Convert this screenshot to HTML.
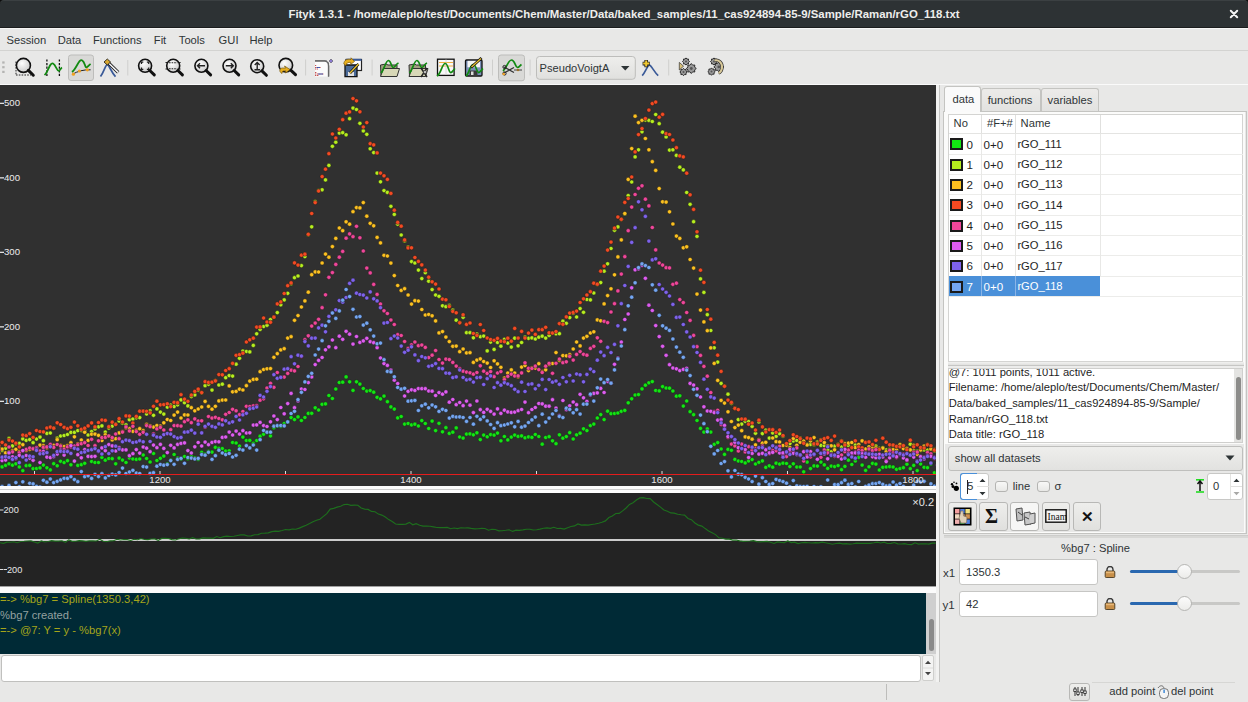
<!DOCTYPE html>
<html><head><meta charset="utf-8">
<style>
*{margin:0;padding:0;box-sizing:border-box}
html,body{width:1248px;height:702px;overflow:hidden;background:#e8e8e7;}
body{font-family:"Liberation Sans",sans-serif;font-size:11.2px;color:#2e3436}
.a{position:absolute}
.t{position:absolute;white-space:nowrap;line-height:1}
#title{left:0;top:0;width:1248px;height:28px;background:#2d3234;border-top:1px solid #3b4042;border-bottom:1px solid #1b1d1e;border-radius:4px 4px 0 0}
#menubar{left:0;top:28px;width:1248px;height:23px;background:#e8e8e7;border-top:1px solid #f6f6f5;border-bottom:1px solid #d3d3d1}
#toolbar{left:0;top:51px;width:1248px;height:34px;background:#e8e8e7;border-bottom:1px solid #fafafa}
.btn{position:absolute;border:1px solid #b8b8b6;border-radius:3px;background:linear-gradient(#eeeeec,#e0e0de)}
.sep{position:absolute;width:1px;background:#cfcfcd}
</style></head><body>
<div class="a" style="left:0;top:0;width:1248px;height:6px;background:#0c0c0c"></div>
<div id="title" class="a">
  <div class="t" style="left:288px;top:8px;width:672px;text-align:center;color:#eeeeec;font-weight:bold;font-size:11.4px">Fityk 1.3.1 - /home/aleplo/test/Documents/Chem/Master/Data/baked_samples/11_cas924894-85-9/Sample/Raman/rGO_118.txt</div>
  <svg class="a" style="left:1229px;top:8px" width="10" height="10"><path d="M1.8 1.8 L8.2 8.2 M8.2 1.8 L1.8 8.2" stroke="#f4f4f4" stroke-width="2" stroke-linecap="round"/></svg>
</div>
<div id="menubar" class="a">
  <div class="t" style="left:6.5px;top:6px">Session</div>
  <div class="t" style="left:57.7px;top:6px">Data</div>
  <div class="t" style="left:93px;top:6px">Functions</div>
  <div class="t" style="left:153.8px;top:6px">Fit</div>
  <div class="t" style="left:178.8px;top:6px">Tools</div>
  <div class="t" style="left:218.6px;top:6px">GUI</div>
  <div class="t" style="left:249.4px;top:6px">Help</div>
</div>
<div id="toolbar" class="a"><svg class="a" style="left:0;top:0" width="760" height="34" viewBox="0 51 760 34"><defs><radialGradient id="mg" cx="0.4" cy="0.35" r="0.7"><stop offset="0" stop-color="#ffffff"/><stop offset="1" stop-color="#c8c8c8"/></radialGradient></defs><rect x="2.2" y="61.4" width="2.4" height="2.2" fill="#b4b4b2"/><rect x="2.2" y="66.10000000000001" width="2.4" height="2.2" fill="#b4b4b2"/><rect x="2.2" y="70.80000000000001" width="2.4" height="2.2" fill="#b4b4b2"/><rect x="68.5" y="55" width="25" height="25.5" rx="2.5" fill="#d9d9d7" stroke="#bdbdbb" stroke-width="1"/><rect x="498.5" y="55" width="26" height="25.8" rx="2.5" fill="#d9d9d7" stroke="#bdbdbb" stroke-width="1"/><path d="M16 75 L31 75 M16 61.5 L16 75" stroke="#111" stroke-width="0.9" stroke-dasharray="1.6 1.2"/><circle cx="23.4" cy="65.4" r="7.0" fill="url(#mg)" stroke="#111" stroke-width="1.6"/><path d="M28.4 70.4 L33.3 75.2" stroke="#111" stroke-width="3" stroke-linecap="round"/><path d="M46.9 59.4 L46.9 76.6 M59.4 59.4 L59.4 76.6" stroke="#111" stroke-width="1.3" stroke-dasharray="2.2 1.4"/><path d="M44.5 75 C48 72 50 62 53 63.5 C56 65 56.5 71 58.9 70.8 C60 70.5 61 68 62 67.5" stroke="#128a12" stroke-width="1.8" fill="none"/><path d="M72 74.5 C78 71 84 69.5 90.6 69.8" stroke="#222" stroke-width="1" fill="none"/><path d="M71.9 71.9 C76 70 79 58 82.3 60.4 C85 62 85 68 86.5 67.5 C88 67 89 65 90.6 64" stroke="#128a12" stroke-width="1.8" fill="none"/><circle cx="73.4" cy="74.2" r="1.6" fill="#f0a020"/><circle cx="79.4" cy="71" r="1.6" fill="#f0a020"/><circle cx="87.3" cy="69.8" r="1.6" fill="#f0a020"/><path d="M100.5 76.6 C104 72 105.5 64.6 107.3 64.6 C109 64.6 111 72 115.5 76.6" stroke="#3a5a98" stroke-width="1.7" fill="none"/><path d="M107 61.5 L118.2 72.4" stroke="#111" stroke-width="3.2"/><path d="M107 61.5 L118.2 72.4" stroke="#f4f4f4" stroke-width="1.6"/><path d="M104 62 L107.3 59 L110.6 62 L107.3 65 Z" fill="#d8a830" stroke="#111" stroke-width="0.8"/><rect x="127.3" y="60" width="1" height="15.5" fill="#cfcfcd"/><circle cx="145.1" cy="65.8" r="6.5" fill="url(#mg)" stroke="#111" stroke-width="1.6"/><path d="M149.8 70.5 L154.3 74.9" stroke="#111" stroke-width="3" stroke-linecap="round"/><path d="M141.5 64 L141.5 62.2 L143.3 62.2 M146.9 62.2 L148.7 62.2 L148.7 64 M148.7 67.6 L148.7 69.4 L146.9 69.4 M143.3 69.4 L141.5 69.4 L141.5 67.6" stroke="#222" stroke-width="1.2" fill="none"/><circle cx="173.2" cy="65.8" r="6.5" fill="url(#mg)" stroke="#111" stroke-width="1.6"/><path d="M177.9 70.5 L182.4 74.9" stroke="#111" stroke-width="3" stroke-linecap="round"/><path d="M169 62.8 L177.4 62.8 M169 68.8 L177.4 68.8 M165.5 62.5 L167.5 62.5 M165.5 69 L167.5 69 M179 62.5 L181 62.5 M179 69 L181 69" stroke="#222" stroke-width="1.1" stroke-dasharray="1.6 1" fill="none"/><circle cx="201.4" cy="65.8" r="6.5" fill="url(#mg)" stroke="#111" stroke-width="1.6"/><path d="M206.1 70.5 L210.6 74.9" stroke="#111" stroke-width="3" stroke-linecap="round"/><path d="M197.5 65.8 L205 65.8 M200 63.3 L197.5 65.8 L200 68.3" stroke="#222" stroke-width="1.4" fill="none"/><circle cx="229.5" cy="65.8" r="6.5" fill="url(#mg)" stroke="#111" stroke-width="1.6"/><path d="M234.2 70.5 L238.7 74.9" stroke="#111" stroke-width="3" stroke-linecap="round"/><path d="M225.8 65.8 L233.3 65.8 M230.8 63.3 L233.3 65.8 L230.8 68.3" stroke="#222" stroke-width="1.4" fill="none"/><circle cx="257.2" cy="66.2" r="6.5" fill="url(#mg)" stroke="#111" stroke-width="1.6"/><path d="M261.9 70.9 L266.4 75.3" stroke="#111" stroke-width="3" stroke-linecap="round"/><path d="M257.2 62.5 L257.2 69.5 M254.7 65 L257.2 62.5 L259.7 65 M254.5 69.8 L260 69.8" stroke="#222" stroke-width="1.4" fill="none"/><circle cx="285.8" cy="65.2" r="6.8" fill="url(#mg)" stroke="#111" stroke-width="1.6"/><path d="M290.7 70.1 L295.5 74.7" stroke="#111" stroke-width="3" stroke-linecap="round"/><path d="M282 73.5 C279 72 279 68.5 282.5 68 L285.5 68.2 L284.5 66 L290 69.5 L285.5 73 L285.8 70.8 L283 71 C282 71.5 282.5 72.5 282 73.5 Z" fill="#e8b020" stroke="#7a5a10" stroke-width="0.7"/><rect x="305.1" y="59.5" width="1" height="16" fill="#cfcfcd"/><path d="M315 61 L324.5 61 C327 61 328.5 63 328.5 66 L328.5 76.6" stroke="#555" stroke-width="1.4" fill="#f6f6f6"/><rect x="315" y="61" width="13" height="15.6" fill="#fbfbfb"/><path d="M315 61.2 L324.5 61.2 C327 61.2 328.5 63 328.5 66 L328.5 76.6" stroke="#666" stroke-width="1.3" fill="none"/><path d="M315 65.5 L316.5 65.5 M315 67.5 L321 67.5 M315 69 L318 69 M315 72.5 L317 72.5 M315 74 L324 74 M315 75.5 L319 75.5" stroke="#c04040" stroke-width="0.9" stroke-dasharray="1.2 0.6"/><path d="M316.5 67.5 L320 67.5 M318 74 L323 74" stroke="#3050b0" stroke-width="0.9"/><path d="M331 59 L333 61 L331 63 L329 61 Z" fill="#8a7ad0" stroke="#444" stroke-width="0.5"/><rect x="346" y="59.5" width="15.5" height="11" fill="#fff" stroke="#222" stroke-width="1.2"/><rect x="346" y="58.8" width="15.5" height="2" fill="#3a5a98"/><path d="M345 65 L357 65 L357 76.6 L345 76.6 Z" fill="#4a6a98" stroke="#111" stroke-width="1.3"/><rect x="348" y="72" width="6" height="4" fill="#e0e0e0"/><path d="M343.8 64 C344 60 347 58.5 351 59.5 L351 57.8 L354.5 61.5 L350.5 64.5 L350.8 62.5 C348 62 346.5 63 346 65.5 Z" fill="#e8b020" stroke="#7a5a10" stroke-width="0.7"/><path d="M350 73 L358.5 64" stroke="#111" stroke-width="2.6"/><path d="M350 73 L358.5 64" stroke="#e8c030" stroke-width="1.4"/><rect x="371.6" y="59.5" width="1" height="16" fill="#cfcfcd"/><path d="M380.5 65 L386 64 L388 65 L397 65 L397 76 L381 76 Z" fill="#a0a080" stroke="#333" stroke-width="1"/><path d="M380.5 76.5 L383.5 68.5 L399.5 68.5 L397 76.5 Z" fill="#d8d8b8" stroke="#333" stroke-width="1"/><path d="M381 73 C384 70 386 60 388.5 60.5 C391 61 391.5 67 393 67.5 C394.5 68 396 64 398.5 63" stroke="#128a12" stroke-width="1.7" fill="none"/><path d="M409.0 65 L414.5 64 L416.5 65 L425.5 65 L425.5 76 L409.5 76 Z" fill="#a0a080" stroke="#333" stroke-width="1"/><path d="M409.0 76.5 L412.0 68.5 L428.0 68.5 L425.5 76.5 Z" fill="#d8d8b8" stroke="#333" stroke-width="1"/><path d="M409.5 73 C412.5 70 414.5 60 417 60.5 C419.5 61 420 67 421.5 67.5 C423 68 424.5 64 427 63" stroke="#128a12" stroke-width="1.7" fill="none"/><path d="M421 68 L427 77 M427 68 L421 77" stroke="#222" stroke-width="1.5"/><circle cx="425" cy="72" r="1.7" fill="#bbb" stroke="#222" stroke-width="0.6"/><rect x="437.5" y="59.2" width="16.6" height="16.2" fill="#f8f8f8" stroke="#111" stroke-width="1.3"/><path d="M439 62.5 L453 62.5 M439 66 L453 66" stroke="#f0b040" stroke-width="1.2"/><path d="M446 59.5 L446 75" stroke="#d0d0d0" stroke-width="0.8"/><path d="M437 76 C441 74 442 64 445 63.5 C448 63 448.5 72 450.5 72.5 C452 73 453.5 70 455 68.5" stroke="#128a12" stroke-width="1.7" fill="none"/><rect x="465.5" y="60" width="16.5" height="16" rx="1" fill="#7a90b8" stroke="#111" stroke-width="1.3"/><rect x="467.5" y="60.8" width="12.5" height="6.5" fill="#f4f4f4"/><rect x="469.5" y="70.5" width="8" height="5.5" fill="#3a3a3a"/><rect x="471" y="71.5" width="2.5" height="3.5" fill="#ddd"/><path d="M466 76 C469 74 470 65 473 64.5 C476 64 476.5 72 478.5 72.5 C480 73 481 70 483 68.5" stroke="#128a12" stroke-width="1.7" fill="none"/><path d="M471 67.5 L481.5 58" stroke="#111" stroke-width="2.8"/><path d="M471.5 67 L481 58.5" stroke="#e8c030" stroke-width="1.3"/><rect x="492" y="59.5" width="1" height="16" fill="#cfcfcd"/><path d="M503 71 C507 68 508 60 511.5 60 C515 60 515 67 517.5 67.5 C519 67.5 520 65.5 521.5 64.5" stroke="#128a12" stroke-width="1.7" fill="none"/><path d="M504 73 L514 67.5 M504 67 L514 72.5" stroke="#333" stroke-width="1.2"/><circle cx="504.5" cy="73.5" r="1.6" fill="none" stroke="#222" stroke-width="1"/><circle cx="504.5" cy="67" r="1.6" fill="none" stroke="#222" stroke-width="1"/><circle cx="503.7" cy="74" r="1.3" fill="#f0a020"/><circle cx="518" cy="70" r="1.3" fill="#f0a020"/><path d="M514 70 L522 70" stroke="#333" stroke-width="0.9"/><rect x="529.6" y="59.5" width="1" height="16" fill="#cfcfcd"/><rect x="536.5" y="56.5" width="98.8" height="22.8" rx="3" fill="url(#cb)" stroke="#bdbdbb" stroke-width="1"/><defs><linearGradient id="cb" x1="0" y1="0" x2="0" y2="1"><stop offset="0" stop-color="#eeeeec"/><stop offset="1" stop-color="#e0e0de"/></linearGradient></defs><text x="539.6" y="71.6" font-size="11.1" font-family="Liberation Sans" fill="#2e3436">PseudoVoigtA</text><path d="M621 66 L629.5 66 L625.25 70.5 Z" fill="#2e3436"/><path d="M642.2 75.6 C645.5 72 647.5 65.2 649.4 65.2 C651.3 65.2 654 72 658.2 75.6" stroke="#3a5a98" stroke-width="1.7" fill="none"/><path d="M646.2 60 L646.2 67.2 M642.6 63.6 L649.8 63.6" stroke="#222" stroke-width="3.6"/><path d="M646.2 60.6 L646.2 66.6 M643.2 63.6 L649.2 63.6" stroke="#f0c830" stroke-width="2"/><rect x="668.2" y="59.5" width="1" height="16" fill="#cfcfcd"/><path d="M679.3 62.4 L683.5 66.2 L679.3 70 Z" fill="#d8c078" stroke="#333" stroke-width="0.7"/><polygon points="689.6,61.5 688.4,62.5 688.5,64.0 687.0,63.9 686.0,65.1 685.0,63.9 683.5,64.0 683.6,62.5 682.4,61.5 683.6,60.5 683.5,59.0 685.0,59.1 686.0,57.9 687.0,59.1 688.5,59.0 688.4,60.5" fill="#9a9a9a" stroke="#222" stroke-width="0.9"/><circle cx="686" cy="61.5" r="1.0" fill="#555"/><polygon points="687.2,72.0 686.0,73.0 686.1,74.6 684.5,74.5 683.5,75.7 682.5,74.5 680.9,74.6 681.0,73.0 679.8,72.0 681.0,71.0 680.9,69.4 682.5,69.5 683.5,68.3 684.5,69.5 686.1,69.4 686.0,71.0" fill="#9a9a9a" stroke="#222" stroke-width="0.9"/><circle cx="683.5" cy="72" r="1.0" fill="#555"/><polygon points="696.3,68.5 694.6,69.9 694.8,72.0 692.7,71.8 691.3,73.5 689.9,71.8 687.8,72.0 688.0,69.9 686.3,68.5 688.0,67.1 687.8,65.0 689.9,65.2 691.3,63.5 692.7,65.2 694.8,65.0 694.6,67.1" fill="#9a9a9a" stroke="#222" stroke-width="0.9"/><circle cx="691.3" cy="68.5" r="1.4" fill="#555"/><polygon points="717.6,61.5 716.4,62.5 716.5,64.0 715.0,63.9 714.0,65.1 713.0,63.9 711.5,64.0 711.6,62.5 710.4,61.5 711.6,60.5 711.5,59.0 713.0,59.1 714.0,57.9 715.0,59.1 716.5,59.0 716.4,60.5" fill="#9a9a9a" stroke="#222" stroke-width="0.9"/><circle cx="714" cy="61.5" r="1.0" fill="#555"/><polygon points="715.2,71.6 714.0,72.6 714.1,74.2 712.5,74.1 711.5,75.3 710.5,74.1 708.9,74.2 709.0,72.6 707.8,71.6 709.0,70.6 708.9,69.0 710.5,69.1 711.5,67.9 712.5,69.1 714.1,69.0 714.0,70.6" fill="#9a9a9a" stroke="#222" stroke-width="0.9"/><circle cx="711.5" cy="71.6" r="1.0" fill="#555"/><polygon points="723.8,66.9 722.1,68.3 722.3,70.4 720.2,70.2 718.8,71.9 717.4,70.2 715.3,70.4 715.5,68.3 713.8,66.9 715.5,65.5 715.3,63.4 717.4,63.6 718.8,61.9 720.2,63.6 722.3,63.4 722.1,65.5" fill="#9a9a9a" stroke="#222" stroke-width="0.9"/><circle cx="718.8" cy="66.9" r="1.4" fill="#555"/><path d="M714.5 60.5 C719 59.5 722.5 63 722 68 C721.5 71 720 72.5 718.5 73" stroke="#333" stroke-width="3.4" fill="none"/><path d="M714.5 60.5 C719 59.5 722.5 63 722 68 C721.5 71 720 72.5 718.5 73" stroke="#d8c898" stroke-width="2" fill="none"/></svg></div>
<div class="a" style="left:0;top:85px;width:936px;height:401px;overflow:hidden"><svg width="936" height="401" viewBox="0 85 936 401" style="position:absolute;left:0;top:0;font-family:Liberation Sans"><rect x="0" y="85" width="936" height="401" fill="#303030"/><g fill="#12e612" stroke="#1e1e1e" stroke-width="0.45"><circle cx="-1.3" cy="466.0" r="2.1"/><circle cx="2.1" cy="466.9" r="2.1"/><circle cx="5.6" cy="465.4" r="2.1"/><circle cx="9.0" cy="463.8" r="2.1"/><circle cx="12.5" cy="465.2" r="2.1"/><circle cx="15.9" cy="463.8" r="2.1"/><circle cx="19.3" cy="466.9" r="2.1"/><circle cx="22.8" cy="470.7" r="2.1"/><circle cx="26.2" cy="465.7" r="2.1"/><circle cx="29.7" cy="465.4" r="2.1"/><circle cx="33.1" cy="468.7" r="2.1"/><circle cx="36.5" cy="468.5" r="2.1"/><circle cx="40.0" cy="467.9" r="2.1"/><circle cx="43.4" cy="465.1" r="2.1"/><circle cx="46.9" cy="467.8" r="2.1"/><circle cx="50.3" cy="469.9" r="2.1"/><circle cx="53.7" cy="463.7" r="2.1"/><circle cx="57.2" cy="465.8" r="2.1"/><circle cx="60.6" cy="461.3" r="2.1"/><circle cx="64.1" cy="462.6" r="2.1"/><circle cx="67.5" cy="460.7" r="2.1"/><circle cx="70.9" cy="464.8" r="2.1"/><circle cx="74.4" cy="461.5" r="2.1"/><circle cx="77.8" cy="465.4" r="2.1"/><circle cx="81.3" cy="464.7" r="2.1"/><circle cx="84.7" cy="463.3" r="2.1"/><circle cx="88.1" cy="456.2" r="2.1"/><circle cx="91.6" cy="461.5" r="2.1"/><circle cx="95.0" cy="462.5" r="2.1"/><circle cx="98.5" cy="462.5" r="2.1"/><circle cx="101.9" cy="457.5" r="2.1"/><circle cx="105.3" cy="460.2" r="2.1"/><circle cx="108.8" cy="458.5" r="2.1"/><circle cx="112.2" cy="458.7" r="2.1"/><circle cx="115.7" cy="463.8" r="2.1"/><circle cx="119.1" cy="458.1" r="2.1"/><circle cx="122.5" cy="460.1" r="2.1"/><circle cx="126.0" cy="462.5" r="2.1"/><circle cx="129.4" cy="458.0" r="2.1"/><circle cx="132.9" cy="459.0" r="2.1"/><circle cx="136.3" cy="459.4" r="2.1"/><circle cx="139.7" cy="459.0" r="2.1"/><circle cx="143.2" cy="455.0" r="2.1"/><circle cx="146.6" cy="458.5" r="2.1"/><circle cx="150.1" cy="462.0" r="2.1"/><circle cx="153.5" cy="453.5" r="2.1"/><circle cx="156.9" cy="460.5" r="2.1"/><circle cx="160.4" cy="458.3" r="2.1"/><circle cx="163.8" cy="456.1" r="2.1"/><circle cx="167.3" cy="463.8" r="2.1"/><circle cx="170.7" cy="460.2" r="2.1"/><circle cx="174.1" cy="454.5" r="2.1"/><circle cx="177.6" cy="458.0" r="2.1"/><circle cx="181.0" cy="459.1" r="2.1"/><circle cx="184.5" cy="456.5" r="2.1"/><circle cx="187.9" cy="458.7" r="2.1"/><circle cx="191.3" cy="456.2" r="2.1"/><circle cx="194.8" cy="457.9" r="2.1"/><circle cx="198.2" cy="459.4" r="2.1"/><circle cx="201.7" cy="452.4" r="2.1"/><circle cx="205.1" cy="454.1" r="2.1"/><circle cx="208.5" cy="451.3" r="2.1"/><circle cx="212.0" cy="452.1" r="2.1"/><circle cx="215.4" cy="447.4" r="2.1"/><circle cx="218.9" cy="448.3" r="2.1"/><circle cx="222.3" cy="448.6" r="2.1"/><circle cx="225.7" cy="451.0" r="2.1"/><circle cx="229.2" cy="450.8" r="2.1"/><circle cx="232.6" cy="442.5" r="2.1"/><circle cx="236.1" cy="443.0" r="2.1"/><circle cx="239.5" cy="446.1" r="2.1"/><circle cx="242.9" cy="437.1" r="2.1"/><circle cx="246.4" cy="440.5" r="2.1"/><circle cx="249.8" cy="440.4" r="2.1"/><circle cx="253.3" cy="443.4" r="2.1"/><circle cx="256.7" cy="440.5" r="2.1"/><circle cx="260.1" cy="436.2" r="2.1"/><circle cx="263.6" cy="434.3" r="2.1"/><circle cx="267.0" cy="432.6" r="2.1"/><circle cx="270.5" cy="435.9" r="2.1"/><circle cx="273.9" cy="427.8" r="2.1"/><circle cx="277.3" cy="426.1" r="2.1"/><circle cx="280.8" cy="426.4" r="2.1"/><circle cx="284.2" cy="423.5" r="2.1"/><circle cx="287.7" cy="421.9" r="2.1"/><circle cx="291.1" cy="417.6" r="2.1"/><circle cx="294.5" cy="419.6" r="2.1"/><circle cx="298.0" cy="416.9" r="2.1"/><circle cx="301.4" cy="420.5" r="2.1"/><circle cx="304.9" cy="417.5" r="2.1"/><circle cx="308.3" cy="413.4" r="2.1"/><circle cx="311.7" cy="413.3" r="2.1"/><circle cx="315.2" cy="407.8" r="2.1"/><circle cx="318.6" cy="410.0" r="2.1"/><circle cx="322.1" cy="404.3" r="2.1"/><circle cx="325.5" cy="403.9" r="2.1"/><circle cx="328.9" cy="395.5" r="2.1"/><circle cx="332.4" cy="398.5" r="2.1"/><circle cx="335.8" cy="389.0" r="2.1"/><circle cx="339.3" cy="382.5" r="2.1"/><circle cx="342.7" cy="382.2" r="2.1"/><circle cx="346.1" cy="376.9" r="2.1"/><circle cx="349.6" cy="381.8" r="2.1"/><circle cx="353.0" cy="390.4" r="2.1"/><circle cx="356.5" cy="381.8" r="2.1"/><circle cx="359.9" cy="384.1" r="2.1"/><circle cx="363.3" cy="388.5" r="2.1"/><circle cx="366.8" cy="391.1" r="2.1"/><circle cx="370.2" cy="390.6" r="2.1"/><circle cx="373.7" cy="392.2" r="2.1"/><circle cx="377.1" cy="397.3" r="2.1"/><circle cx="380.5" cy="398.9" r="2.1"/><circle cx="384.0" cy="396.1" r="2.1"/><circle cx="387.4" cy="401.7" r="2.1"/><circle cx="390.9" cy="406.9" r="2.1"/><circle cx="394.3" cy="409.1" r="2.1"/><circle cx="397.7" cy="417.9" r="2.1"/><circle cx="401.2" cy="416.5" r="2.1"/><circle cx="404.6" cy="424.1" r="2.1"/><circle cx="408.1" cy="423.5" r="2.1"/><circle cx="411.5" cy="424.9" r="2.1"/><circle cx="414.9" cy="424.2" r="2.1"/><circle cx="418.4" cy="426.0" r="2.1"/><circle cx="421.8" cy="420.6" r="2.1"/><circle cx="425.3" cy="423.5" r="2.1"/><circle cx="428.7" cy="428.5" r="2.1"/><circle cx="432.1" cy="421.1" r="2.1"/><circle cx="435.6" cy="430.6" r="2.1"/><circle cx="439.0" cy="423.3" r="2.1"/><circle cx="442.5" cy="431.8" r="2.1"/><circle cx="445.9" cy="427.7" r="2.1"/><circle cx="449.3" cy="433.4" r="2.1"/><circle cx="452.8" cy="432.2" r="2.1"/><circle cx="456.2" cy="427.9" r="2.1"/><circle cx="459.7" cy="437.0" r="2.1"/><circle cx="463.1" cy="438.1" r="2.1"/><circle cx="466.5" cy="434.1" r="2.1"/><circle cx="470.0" cy="433.9" r="2.1"/><circle cx="473.4" cy="434.8" r="2.1"/><circle cx="476.9" cy="432.8" r="2.1"/><circle cx="480.3" cy="439.6" r="2.1"/><circle cx="483.7" cy="435.1" r="2.1"/><circle cx="487.2" cy="436.8" r="2.1"/><circle cx="490.6" cy="434.6" r="2.1"/><circle cx="494.1" cy="435.1" r="2.1"/><circle cx="497.5" cy="433.1" r="2.1"/><circle cx="500.9" cy="440.8" r="2.1"/><circle cx="504.4" cy="436.5" r="2.1"/><circle cx="507.8" cy="439.9" r="2.1"/><circle cx="511.3" cy="437.1" r="2.1"/><circle cx="514.7" cy="435.1" r="2.1"/><circle cx="518.1" cy="436.4" r="2.1"/><circle cx="521.6" cy="435.9" r="2.1"/><circle cx="525.0" cy="437.8" r="2.1"/><circle cx="528.5" cy="436.9" r="2.1"/><circle cx="531.9" cy="437.4" r="2.1"/><circle cx="535.3" cy="434.5" r="2.1"/><circle cx="538.8" cy="436.5" r="2.1"/><circle cx="542.2" cy="444.2" r="2.1"/><circle cx="545.7" cy="437.5" r="2.1"/><circle cx="549.1" cy="436.7" r="2.1"/><circle cx="552.5" cy="440.8" r="2.1"/><circle cx="556.0" cy="443.7" r="2.1"/><circle cx="559.4" cy="434.8" r="2.1"/><circle cx="562.9" cy="438.2" r="2.1"/><circle cx="566.3" cy="436.6" r="2.1"/><circle cx="569.7" cy="432.7" r="2.1"/><circle cx="573.2" cy="439.0" r="2.1"/><circle cx="576.6" cy="434.8" r="2.1"/><circle cx="580.1" cy="433.2" r="2.1"/><circle cx="583.5" cy="428.8" r="2.1"/><circle cx="586.9" cy="430.6" r="2.1"/><circle cx="590.4" cy="425.6" r="2.1"/><circle cx="593.8" cy="424.1" r="2.1"/><circle cx="597.3" cy="418.0" r="2.1"/><circle cx="600.7" cy="414.6" r="2.1"/><circle cx="604.1" cy="419.6" r="2.1"/><circle cx="607.6" cy="411.2" r="2.1"/><circle cx="611.0" cy="413.7" r="2.1"/><circle cx="614.5" cy="413.5" r="2.1"/><circle cx="617.9" cy="413.0" r="2.1"/><circle cx="621.3" cy="411.3" r="2.1"/><circle cx="624.8" cy="410.4" r="2.1"/><circle cx="628.2" cy="402.8" r="2.1"/><circle cx="631.7" cy="398.8" r="2.1"/><circle cx="635.1" cy="395.0" r="2.1"/><circle cx="638.5" cy="394.6" r="2.1"/><circle cx="642.0" cy="388.9" r="2.1"/><circle cx="645.4" cy="385.2" r="2.1"/><circle cx="648.9" cy="382.8" r="2.1"/><circle cx="652.3" cy="381.6" r="2.1"/><circle cx="655.7" cy="390.5" r="2.1"/><circle cx="659.2" cy="390.9" r="2.1"/><circle cx="662.6" cy="386.6" r="2.1"/><circle cx="666.1" cy="388.0" r="2.1"/><circle cx="669.5" cy="388.2" r="2.1"/><circle cx="672.9" cy="391.0" r="2.1"/><circle cx="676.4" cy="396.2" r="2.1"/><circle cx="679.8" cy="395.8" r="2.1"/><circle cx="683.3" cy="406.1" r="2.1"/><circle cx="686.7" cy="401.0" r="2.1"/><circle cx="690.1" cy="411.7" r="2.1"/><circle cx="693.6" cy="414.7" r="2.1"/><circle cx="697.0" cy="420.5" r="2.1"/><circle cx="700.5" cy="428.4" r="2.1"/><circle cx="703.9" cy="432.1" r="2.1"/><circle cx="707.3" cy="428.9" r="2.1"/><circle cx="710.8" cy="432.1" r="2.1"/><circle cx="714.2" cy="444.3" r="2.1"/><circle cx="717.7" cy="442.6" r="2.1"/><circle cx="721.1" cy="449.0" r="2.1"/><circle cx="724.5" cy="454.4" r="2.1"/><circle cx="728.0" cy="449.4" r="2.1"/><circle cx="731.4" cy="450.3" r="2.1"/><circle cx="734.9" cy="459.4" r="2.1"/><circle cx="738.3" cy="461.0" r="2.1"/><circle cx="741.7" cy="461.5" r="2.1"/><circle cx="745.2" cy="462.9" r="2.1"/><circle cx="748.6" cy="460.9" r="2.1"/><circle cx="752.1" cy="459.6" r="2.1"/><circle cx="755.5" cy="464.0" r="2.1"/><circle cx="758.9" cy="462.3" r="2.1"/><circle cx="762.4" cy="460.9" r="2.1"/><circle cx="765.8" cy="467.4" r="2.1"/><circle cx="769.3" cy="465.8" r="2.1"/><circle cx="772.7" cy="467.2" r="2.1"/><circle cx="776.1" cy="463.2" r="2.1"/><circle cx="779.6" cy="464.1" r="2.1"/><circle cx="783.0" cy="463.2" r="2.1"/><circle cx="786.5" cy="463.5" r="2.1"/><circle cx="789.9" cy="466.6" r="2.1"/><circle cx="793.3" cy="463.8" r="2.1"/><circle cx="796.8" cy="467.0" r="2.1"/><circle cx="800.2" cy="467.0" r="2.1"/><circle cx="803.7" cy="471.8" r="2.1"/><circle cx="807.1" cy="462.1" r="2.1"/><circle cx="810.5" cy="468.6" r="2.1"/><circle cx="814.0" cy="465.9" r="2.1"/><circle cx="817.4" cy="466.1" r="2.1"/><circle cx="820.9" cy="462.1" r="2.1"/><circle cx="824.3" cy="464.9" r="2.1"/><circle cx="827.7" cy="468.4" r="2.1"/><circle cx="831.2" cy="466.1" r="2.1"/><circle cx="834.6" cy="466.6" r="2.1"/><circle cx="838.1" cy="465.6" r="2.1"/><circle cx="841.5" cy="469.7" r="2.1"/><circle cx="844.9" cy="466.4" r="2.1"/><circle cx="848.4" cy="460.2" r="2.1"/><circle cx="851.8" cy="464.5" r="2.1"/><circle cx="855.3" cy="461.0" r="2.1"/><circle cx="858.7" cy="457.3" r="2.1"/><circle cx="862.1" cy="465.1" r="2.1"/><circle cx="865.6" cy="470.4" r="2.1"/><circle cx="869.0" cy="466.8" r="2.1"/><circle cx="872.5" cy="463.4" r="2.1"/><circle cx="875.9" cy="464.1" r="2.1"/><circle cx="879.3" cy="470.0" r="2.1"/><circle cx="882.8" cy="467.3" r="2.1"/><circle cx="886.2" cy="467.0" r="2.1"/><circle cx="889.7" cy="466.7" r="2.1"/><circle cx="893.1" cy="467.0" r="2.1"/><circle cx="896.5" cy="469.3" r="2.1"/><circle cx="900.0" cy="468.6" r="2.1"/><circle cx="903.4" cy="467.7" r="2.1"/><circle cx="906.9" cy="464.2" r="2.1"/><circle cx="910.3" cy="468.7" r="2.1"/><circle cx="913.7" cy="465.4" r="2.1"/><circle cx="917.2" cy="470.6" r="2.1"/><circle cx="920.6" cy="464.0" r="2.1"/><circle cx="924.1" cy="467.3" r="2.1"/><circle cx="927.5" cy="467.7" r="2.1"/><circle cx="930.9" cy="464.1" r="2.1"/><circle cx="934.4" cy="472.8" r="2.1"/><circle cx="937.8" cy="472.1" r="2.1"/></g><g fill="#b6ee1e" stroke="#1e1e1e" stroke-width="0.45"><circle cx="-1.3" cy="447.4" r="2.1"/><circle cx="2.1" cy="450.4" r="2.1"/><circle cx="5.6" cy="448.3" r="2.1"/><circle cx="9.0" cy="438.4" r="2.1"/><circle cx="12.5" cy="445.9" r="2.1"/><circle cx="15.9" cy="444.0" r="2.1"/><circle cx="19.3" cy="443.4" r="2.1"/><circle cx="22.8" cy="438.9" r="2.1"/><circle cx="26.2" cy="440.3" r="2.1"/><circle cx="29.7" cy="439.6" r="2.1"/><circle cx="33.1" cy="442.7" r="2.1"/><circle cx="36.5" cy="439.1" r="2.1"/><circle cx="40.0" cy="437.1" r="2.1"/><circle cx="43.4" cy="440.7" r="2.1"/><circle cx="46.9" cy="433.4" r="2.1"/><circle cx="50.3" cy="433.0" r="2.1"/><circle cx="53.7" cy="428.2" r="2.1"/><circle cx="57.2" cy="438.2" r="2.1"/><circle cx="60.6" cy="436.0" r="2.1"/><circle cx="64.1" cy="435.5" r="2.1"/><circle cx="67.5" cy="434.5" r="2.1"/><circle cx="70.9" cy="432.4" r="2.1"/><circle cx="74.4" cy="432.4" r="2.1"/><circle cx="77.8" cy="430.6" r="2.1"/><circle cx="81.3" cy="430.4" r="2.1"/><circle cx="84.7" cy="430.9" r="2.1"/><circle cx="88.1" cy="435.0" r="2.1"/><circle cx="91.6" cy="431.6" r="2.1"/><circle cx="95.0" cy="429.0" r="2.1"/><circle cx="98.5" cy="426.8" r="2.1"/><circle cx="101.9" cy="425.9" r="2.1"/><circle cx="105.3" cy="432.1" r="2.1"/><circle cx="108.8" cy="428.1" r="2.1"/><circle cx="112.2" cy="426.1" r="2.1"/><circle cx="115.7" cy="424.1" r="2.1"/><circle cx="119.1" cy="421.0" r="2.1"/><circle cx="122.5" cy="423.2" r="2.1"/><circle cx="126.0" cy="424.9" r="2.1"/><circle cx="129.4" cy="419.7" r="2.1"/><circle cx="132.9" cy="419.0" r="2.1"/><circle cx="136.3" cy="417.8" r="2.1"/><circle cx="139.7" cy="417.6" r="2.1"/><circle cx="143.2" cy="411.0" r="2.1"/><circle cx="146.6" cy="414.0" r="2.1"/><circle cx="150.1" cy="410.9" r="2.1"/><circle cx="153.5" cy="415.3" r="2.1"/><circle cx="156.9" cy="408.9" r="2.1"/><circle cx="160.4" cy="412.1" r="2.1"/><circle cx="163.8" cy="414.1" r="2.1"/><circle cx="167.3" cy="407.1" r="2.1"/><circle cx="170.7" cy="405.1" r="2.1"/><circle cx="174.1" cy="406.6" r="2.1"/><circle cx="177.6" cy="404.8" r="2.1"/><circle cx="181.0" cy="399.9" r="2.1"/><circle cx="184.5" cy="402.7" r="2.1"/><circle cx="187.9" cy="405.9" r="2.1"/><circle cx="191.3" cy="396.6" r="2.1"/><circle cx="194.8" cy="394.9" r="2.1"/><circle cx="198.2" cy="390.2" r="2.1"/><circle cx="201.7" cy="392.8" r="2.1"/><circle cx="205.1" cy="385.7" r="2.1"/><circle cx="208.5" cy="384.3" r="2.1"/><circle cx="212.0" cy="390.1" r="2.1"/><circle cx="215.4" cy="380.6" r="2.1"/><circle cx="218.9" cy="385.0" r="2.1"/><circle cx="222.3" cy="384.2" r="2.1"/><circle cx="225.7" cy="377.7" r="2.1"/><circle cx="229.2" cy="375.6" r="2.1"/><circle cx="232.6" cy="376.1" r="2.1"/><circle cx="236.1" cy="364.2" r="2.1"/><circle cx="239.5" cy="358.3" r="2.1"/><circle cx="242.9" cy="351.1" r="2.1"/><circle cx="246.4" cy="351.5" r="2.1"/><circle cx="249.8" cy="351.9" r="2.1"/><circle cx="253.3" cy="345.4" r="2.1"/><circle cx="256.7" cy="333.8" r="2.1"/><circle cx="260.1" cy="329.4" r="2.1"/><circle cx="263.6" cy="326.5" r="2.1"/><circle cx="267.0" cy="325.3" r="2.1"/><circle cx="270.5" cy="319.5" r="2.1"/><circle cx="273.9" cy="317.0" r="2.1"/><circle cx="277.3" cy="312.6" r="2.1"/><circle cx="280.8" cy="304.8" r="2.1"/><circle cx="284.2" cy="299.9" r="2.1"/><circle cx="287.7" cy="293.3" r="2.1"/><circle cx="291.1" cy="283.8" r="2.1"/><circle cx="294.5" cy="277.7" r="2.1"/><circle cx="298.0" cy="276.0" r="2.1"/><circle cx="301.4" cy="265.6" r="2.1"/><circle cx="304.9" cy="256.6" r="2.1"/><circle cx="308.3" cy="234.7" r="2.1"/><circle cx="311.7" cy="226.8" r="2.1"/><circle cx="315.2" cy="201.7" r="2.1"/><circle cx="318.6" cy="190.7" r="2.1"/><circle cx="322.1" cy="189.8" r="2.1"/><circle cx="325.5" cy="179.9" r="2.1"/><circle cx="328.9" cy="165.4" r="2.1"/><circle cx="332.4" cy="146.3" r="2.1"/><circle cx="335.8" cy="142.2" r="2.1"/><circle cx="339.3" cy="133.1" r="2.1"/><circle cx="342.7" cy="132.7" r="2.1"/><circle cx="346.1" cy="134.8" r="2.1"/><circle cx="349.6" cy="118.7" r="2.1"/><circle cx="353.0" cy="108.1" r="2.1"/><circle cx="356.5" cy="109.5" r="2.1"/><circle cx="359.9" cy="123.3" r="2.1"/><circle cx="363.3" cy="130.9" r="2.1"/><circle cx="366.8" cy="134.3" r="2.1"/><circle cx="370.2" cy="148.8" r="2.1"/><circle cx="373.7" cy="152.6" r="2.1"/><circle cx="377.1" cy="173.1" r="2.1"/><circle cx="380.5" cy="181.8" r="2.1"/><circle cx="384.0" cy="190.6" r="2.1"/><circle cx="387.4" cy="192.4" r="2.1"/><circle cx="390.9" cy="206.3" r="2.1"/><circle cx="394.3" cy="214.4" r="2.1"/><circle cx="397.7" cy="224.2" r="2.1"/><circle cx="401.2" cy="235.0" r="2.1"/><circle cx="404.6" cy="240.9" r="2.1"/><circle cx="408.1" cy="247.0" r="2.1"/><circle cx="411.5" cy="261.6" r="2.1"/><circle cx="414.9" cy="263.0" r="2.1"/><circle cx="418.4" cy="270.1" r="2.1"/><circle cx="421.8" cy="278.6" r="2.1"/><circle cx="425.3" cy="272.7" r="2.1"/><circle cx="428.7" cy="281.2" r="2.1"/><circle cx="432.1" cy="289.6" r="2.1"/><circle cx="435.6" cy="295.0" r="2.1"/><circle cx="439.0" cy="296.3" r="2.1"/><circle cx="442.5" cy="305.8" r="2.1"/><circle cx="445.9" cy="306.7" r="2.1"/><circle cx="449.3" cy="305.4" r="2.1"/><circle cx="452.8" cy="310.2" r="2.1"/><circle cx="456.2" cy="320.2" r="2.1"/><circle cx="459.7" cy="322.5" r="2.1"/><circle cx="463.1" cy="317.3" r="2.1"/><circle cx="466.5" cy="332.7" r="2.1"/><circle cx="470.0" cy="332.7" r="2.1"/><circle cx="473.4" cy="337.8" r="2.1"/><circle cx="476.9" cy="334.0" r="2.1"/><circle cx="480.3" cy="336.7" r="2.1"/><circle cx="483.7" cy="336.1" r="2.1"/><circle cx="487.2" cy="350.9" r="2.1"/><circle cx="490.6" cy="342.1" r="2.1"/><circle cx="494.1" cy="349.4" r="2.1"/><circle cx="497.5" cy="342.4" r="2.1"/><circle cx="500.9" cy="346.2" r="2.1"/><circle cx="504.4" cy="339.4" r="2.1"/><circle cx="507.8" cy="343.1" r="2.1"/><circle cx="511.3" cy="347.1" r="2.1"/><circle cx="514.7" cy="338.2" r="2.1"/><circle cx="518.1" cy="345.8" r="2.1"/><circle cx="521.6" cy="342.5" r="2.1"/><circle cx="525.0" cy="337.0" r="2.1"/><circle cx="528.5" cy="338.3" r="2.1"/><circle cx="531.9" cy="337.9" r="2.1"/><circle cx="535.3" cy="339.0" r="2.1"/><circle cx="538.8" cy="337.2" r="2.1"/><circle cx="542.2" cy="336.2" r="2.1"/><circle cx="545.7" cy="338.1" r="2.1"/><circle cx="549.1" cy="335.4" r="2.1"/><circle cx="552.5" cy="332.8" r="2.1"/><circle cx="556.0" cy="333.8" r="2.1"/><circle cx="559.4" cy="333.7" r="2.1"/><circle cx="562.9" cy="321.2" r="2.1"/><circle cx="566.3" cy="323.3" r="2.1"/><circle cx="569.7" cy="317.6" r="2.1"/><circle cx="573.2" cy="313.2" r="2.1"/><circle cx="576.6" cy="317.0" r="2.1"/><circle cx="580.1" cy="308.6" r="2.1"/><circle cx="583.5" cy="312.3" r="2.1"/><circle cx="586.9" cy="299.5" r="2.1"/><circle cx="590.4" cy="299.9" r="2.1"/><circle cx="593.8" cy="293.0" r="2.1"/><circle cx="597.3" cy="284.4" r="2.1"/><circle cx="600.7" cy="282.6" r="2.1"/><circle cx="604.1" cy="271.2" r="2.1"/><circle cx="607.6" cy="263.8" r="2.1"/><circle cx="611.0" cy="248.5" r="2.1"/><circle cx="614.5" cy="230.3" r="2.1"/><circle cx="617.9" cy="226.9" r="2.1"/><circle cx="621.3" cy="219.4" r="2.1"/><circle cx="624.8" cy="213.9" r="2.1"/><circle cx="628.2" cy="195.6" r="2.1"/><circle cx="631.7" cy="182.0" r="2.1"/><circle cx="635.1" cy="156.9" r="2.1"/><circle cx="638.5" cy="149.8" r="2.1"/><circle cx="642.0" cy="131.8" r="2.1"/><circle cx="645.4" cy="120.1" r="2.1"/><circle cx="648.9" cy="120.4" r="2.1"/><circle cx="652.3" cy="121.5" r="2.1"/><circle cx="655.7" cy="114.5" r="2.1"/><circle cx="659.2" cy="123.7" r="2.1"/><circle cx="662.6" cy="132.2" r="2.1"/><circle cx="666.1" cy="136.9" r="2.1"/><circle cx="669.5" cy="150.1" r="2.1"/><circle cx="672.9" cy="149.8" r="2.1"/><circle cx="676.4" cy="155.4" r="2.1"/><circle cx="679.8" cy="167.2" r="2.1"/><circle cx="683.3" cy="169.9" r="2.1"/><circle cx="686.7" cy="192.5" r="2.1"/><circle cx="690.1" cy="204.3" r="2.1"/><circle cx="693.6" cy="221.7" r="2.1"/><circle cx="697.0" cy="236.4" r="2.1"/><circle cx="700.5" cy="278.9" r="2.1"/><circle cx="703.9" cy="292.4" r="2.1"/><circle cx="707.3" cy="314.7" r="2.1"/><circle cx="710.8" cy="330.5" r="2.1"/><circle cx="714.2" cy="347.8" r="2.1"/><circle cx="717.7" cy="362.1" r="2.1"/><circle cx="721.1" cy="383.4" r="2.1"/><circle cx="724.5" cy="386.1" r="2.1"/><circle cx="728.0" cy="394.2" r="2.1"/><circle cx="731.4" cy="403.3" r="2.1"/><circle cx="734.9" cy="408.3" r="2.1"/><circle cx="738.3" cy="419.6" r="2.1"/><circle cx="741.7" cy="424.1" r="2.1"/><circle cx="745.2" cy="421.3" r="2.1"/><circle cx="748.6" cy="421.6" r="2.1"/><circle cx="752.1" cy="426.4" r="2.1"/><circle cx="755.5" cy="433.3" r="2.1"/><circle cx="758.9" cy="421.9" r="2.1"/><circle cx="762.4" cy="433.6" r="2.1"/><circle cx="765.8" cy="430.2" r="2.1"/><circle cx="769.3" cy="438.1" r="2.1"/><circle cx="772.7" cy="433.0" r="2.1"/><circle cx="776.1" cy="436.4" r="2.1"/><circle cx="779.6" cy="433.7" r="2.1"/><circle cx="783.0" cy="436.2" r="2.1"/><circle cx="786.5" cy="444.3" r="2.1"/><circle cx="789.9" cy="443.6" r="2.1"/><circle cx="793.3" cy="440.9" r="2.1"/><circle cx="796.8" cy="440.4" r="2.1"/><circle cx="800.2" cy="438.2" r="2.1"/><circle cx="803.7" cy="443.0" r="2.1"/><circle cx="807.1" cy="444.4" r="2.1"/><circle cx="810.5" cy="444.5" r="2.1"/><circle cx="814.0" cy="444.7" r="2.1"/><circle cx="817.4" cy="441.9" r="2.1"/><circle cx="820.9" cy="445.4" r="2.1"/><circle cx="824.3" cy="445.7" r="2.1"/><circle cx="827.7" cy="449.9" r="2.1"/><circle cx="831.2" cy="451.9" r="2.1"/><circle cx="834.6" cy="446.2" r="2.1"/><circle cx="838.1" cy="444.6" r="2.1"/><circle cx="841.5" cy="447.0" r="2.1"/><circle cx="844.9" cy="445.6" r="2.1"/><circle cx="848.4" cy="445.5" r="2.1"/><circle cx="851.8" cy="447.7" r="2.1"/><circle cx="855.3" cy="445.0" r="2.1"/><circle cx="858.7" cy="450.0" r="2.1"/><circle cx="862.1" cy="448.0" r="2.1"/><circle cx="865.6" cy="449.2" r="2.1"/><circle cx="869.0" cy="448.0" r="2.1"/><circle cx="872.5" cy="446.6" r="2.1"/><circle cx="875.9" cy="446.0" r="2.1"/><circle cx="879.3" cy="448.3" r="2.1"/><circle cx="882.8" cy="447.5" r="2.1"/><circle cx="886.2" cy="449.9" r="2.1"/><circle cx="889.7" cy="449.4" r="2.1"/><circle cx="893.1" cy="445.5" r="2.1"/><circle cx="896.5" cy="449.9" r="2.1"/><circle cx="900.0" cy="445.8" r="2.1"/><circle cx="903.4" cy="448.2" r="2.1"/><circle cx="906.9" cy="449.3" r="2.1"/><circle cx="910.3" cy="444.2" r="2.1"/><circle cx="913.7" cy="450.8" r="2.1"/><circle cx="917.2" cy="451.2" r="2.1"/><circle cx="920.6" cy="450.4" r="2.1"/><circle cx="924.1" cy="449.9" r="2.1"/><circle cx="927.5" cy="450.2" r="2.1"/><circle cx="930.9" cy="448.6" r="2.1"/><circle cx="934.4" cy="450.9" r="2.1"/><circle cx="937.8" cy="450.1" r="2.1"/></g><g fill="#fcc020" stroke="#1e1e1e" stroke-width="0.45"><circle cx="-1.3" cy="453.2" r="2.1"/><circle cx="2.1" cy="449.1" r="2.1"/><circle cx="5.6" cy="452.9" r="2.1"/><circle cx="9.0" cy="452.1" r="2.1"/><circle cx="12.5" cy="450.7" r="2.1"/><circle cx="15.9" cy="449.3" r="2.1"/><circle cx="19.3" cy="451.7" r="2.1"/><circle cx="22.8" cy="444.7" r="2.1"/><circle cx="26.2" cy="450.4" r="2.1"/><circle cx="29.7" cy="449.3" r="2.1"/><circle cx="33.1" cy="448.9" r="2.1"/><circle cx="36.5" cy="448.7" r="2.1"/><circle cx="40.0" cy="445.1" r="2.1"/><circle cx="43.4" cy="445.7" r="2.1"/><circle cx="46.9" cy="447.8" r="2.1"/><circle cx="50.3" cy="446.6" r="2.1"/><circle cx="53.7" cy="445.4" r="2.1"/><circle cx="57.2" cy="439.7" r="2.1"/><circle cx="60.6" cy="445.3" r="2.1"/><circle cx="64.1" cy="446.6" r="2.1"/><circle cx="67.5" cy="445.6" r="2.1"/><circle cx="70.9" cy="442.7" r="2.1"/><circle cx="74.4" cy="436.8" r="2.1"/><circle cx="77.8" cy="443.8" r="2.1"/><circle cx="81.3" cy="440.0" r="2.1"/><circle cx="84.7" cy="432.2" r="2.1"/><circle cx="88.1" cy="440.4" r="2.1"/><circle cx="91.6" cy="434.2" r="2.1"/><circle cx="95.0" cy="434.1" r="2.1"/><circle cx="98.5" cy="435.4" r="2.1"/><circle cx="101.9" cy="440.5" r="2.1"/><circle cx="105.3" cy="434.8" r="2.1"/><circle cx="108.8" cy="436.1" r="2.1"/><circle cx="112.2" cy="439.9" r="2.1"/><circle cx="115.7" cy="438.7" r="2.1"/><circle cx="119.1" cy="432.9" r="2.1"/><circle cx="122.5" cy="431.7" r="2.1"/><circle cx="126.0" cy="427.8" r="2.1"/><circle cx="129.4" cy="428.7" r="2.1"/><circle cx="132.9" cy="431.3" r="2.1"/><circle cx="136.3" cy="430.4" r="2.1"/><circle cx="139.7" cy="428.7" r="2.1"/><circle cx="143.2" cy="430.7" r="2.1"/><circle cx="146.6" cy="424.4" r="2.1"/><circle cx="150.1" cy="425.8" r="2.1"/><circle cx="153.5" cy="427.1" r="2.1"/><circle cx="156.9" cy="425.6" r="2.1"/><circle cx="160.4" cy="426.0" r="2.1"/><circle cx="163.8" cy="422.8" r="2.1"/><circle cx="167.3" cy="419.5" r="2.1"/><circle cx="170.7" cy="420.5" r="2.1"/><circle cx="174.1" cy="415.1" r="2.1"/><circle cx="177.6" cy="412.1" r="2.1"/><circle cx="181.0" cy="418.0" r="2.1"/><circle cx="184.5" cy="414.9" r="2.1"/><circle cx="187.9" cy="415.0" r="2.1"/><circle cx="191.3" cy="407.7" r="2.1"/><circle cx="194.8" cy="410.8" r="2.1"/><circle cx="198.2" cy="409.0" r="2.1"/><circle cx="201.7" cy="407.0" r="2.1"/><circle cx="205.1" cy="401.4" r="2.1"/><circle cx="208.5" cy="406.4" r="2.1"/><circle cx="212.0" cy="409.2" r="2.1"/><circle cx="215.4" cy="406.3" r="2.1"/><circle cx="218.9" cy="400.9" r="2.1"/><circle cx="222.3" cy="400.1" r="2.1"/><circle cx="225.7" cy="400.0" r="2.1"/><circle cx="229.2" cy="385.9" r="2.1"/><circle cx="232.6" cy="391.8" r="2.1"/><circle cx="236.1" cy="391.4" r="2.1"/><circle cx="239.5" cy="389.2" r="2.1"/><circle cx="242.9" cy="390.0" r="2.1"/><circle cx="246.4" cy="385.7" r="2.1"/><circle cx="249.8" cy="381.1" r="2.1"/><circle cx="253.3" cy="379.4" r="2.1"/><circle cx="256.7" cy="379.2" r="2.1"/><circle cx="260.1" cy="371.7" r="2.1"/><circle cx="263.6" cy="369.5" r="2.1"/><circle cx="267.0" cy="368.8" r="2.1"/><circle cx="270.5" cy="368.6" r="2.1"/><circle cx="273.9" cy="357.3" r="2.1"/><circle cx="277.3" cy="353.7" r="2.1"/><circle cx="280.8" cy="349.9" r="2.1"/><circle cx="284.2" cy="348.7" r="2.1"/><circle cx="287.7" cy="338.1" r="2.1"/><circle cx="291.1" cy="336.7" r="2.1"/><circle cx="294.5" cy="320.3" r="2.1"/><circle cx="298.0" cy="315.6" r="2.1"/><circle cx="301.4" cy="307.0" r="2.1"/><circle cx="304.9" cy="300.9" r="2.1"/><circle cx="308.3" cy="292.2" r="2.1"/><circle cx="311.7" cy="274.7" r="2.1"/><circle cx="315.2" cy="271.9" r="2.1"/><circle cx="318.6" cy="272.0" r="2.1"/><circle cx="322.1" cy="263.0" r="2.1"/><circle cx="325.5" cy="254.1" r="2.1"/><circle cx="328.9" cy="257.2" r="2.1"/><circle cx="332.4" cy="246.6" r="2.1"/><circle cx="335.8" cy="238.4" r="2.1"/><circle cx="339.3" cy="228.0" r="2.1"/><circle cx="342.7" cy="230.7" r="2.1"/><circle cx="346.1" cy="221.8" r="2.1"/><circle cx="349.6" cy="224.2" r="2.1"/><circle cx="353.0" cy="211.7" r="2.1"/><circle cx="356.5" cy="207.6" r="2.1"/><circle cx="359.9" cy="207.9" r="2.1"/><circle cx="363.3" cy="202.6" r="2.1"/><circle cx="366.8" cy="216.2" r="2.1"/><circle cx="370.2" cy="223.3" r="2.1"/><circle cx="373.7" cy="225.8" r="2.1"/><circle cx="377.1" cy="237.4" r="2.1"/><circle cx="380.5" cy="242.9" r="2.1"/><circle cx="384.0" cy="255.3" r="2.1"/><circle cx="387.4" cy="256.0" r="2.1"/><circle cx="390.9" cy="263.1" r="2.1"/><circle cx="394.3" cy="275.6" r="2.1"/><circle cx="397.7" cy="285.5" r="2.1"/><circle cx="401.2" cy="290.4" r="2.1"/><circle cx="404.6" cy="288.7" r="2.1"/><circle cx="408.1" cy="295.0" r="2.1"/><circle cx="411.5" cy="304.1" r="2.1"/><circle cx="414.9" cy="300.7" r="2.1"/><circle cx="418.4" cy="301.1" r="2.1"/><circle cx="421.8" cy="309.5" r="2.1"/><circle cx="425.3" cy="315.0" r="2.1"/><circle cx="428.7" cy="314.5" r="2.1"/><circle cx="432.1" cy="315.8" r="2.1"/><circle cx="435.6" cy="320.9" r="2.1"/><circle cx="439.0" cy="332.9" r="2.1"/><circle cx="442.5" cy="331.6" r="2.1"/><circle cx="445.9" cy="337.1" r="2.1"/><circle cx="449.3" cy="341.6" r="2.1"/><circle cx="452.8" cy="346.3" r="2.1"/><circle cx="456.2" cy="346.1" r="2.1"/><circle cx="459.7" cy="351.7" r="2.1"/><circle cx="463.1" cy="349.0" r="2.1"/><circle cx="466.5" cy="352.9" r="2.1"/><circle cx="470.0" cy="352.7" r="2.1"/><circle cx="473.4" cy="362.4" r="2.1"/><circle cx="476.9" cy="360.1" r="2.1"/><circle cx="480.3" cy="358.9" r="2.1"/><circle cx="483.7" cy="361.5" r="2.1"/><circle cx="487.2" cy="363.1" r="2.1"/><circle cx="490.6" cy="367.5" r="2.1"/><circle cx="494.1" cy="360.8" r="2.1"/><circle cx="497.5" cy="363.9" r="2.1"/><circle cx="500.9" cy="367.3" r="2.1"/><circle cx="504.4" cy="378.0" r="2.1"/><circle cx="507.8" cy="373.1" r="2.1"/><circle cx="511.3" cy="369.9" r="2.1"/><circle cx="514.7" cy="373.1" r="2.1"/><circle cx="518.1" cy="376.8" r="2.1"/><circle cx="521.6" cy="367.1" r="2.1"/><circle cx="525.0" cy="365.6" r="2.1"/><circle cx="528.5" cy="370.6" r="2.1"/><circle cx="531.9" cy="367.8" r="2.1"/><circle cx="535.3" cy="368.1" r="2.1"/><circle cx="538.8" cy="363.7" r="2.1"/><circle cx="542.2" cy="371.6" r="2.1"/><circle cx="545.7" cy="369.8" r="2.1"/><circle cx="549.1" cy="364.5" r="2.1"/><circle cx="552.5" cy="363.5" r="2.1"/><circle cx="556.0" cy="352.6" r="2.1"/><circle cx="559.4" cy="360.4" r="2.1"/><circle cx="562.9" cy="355.6" r="2.1"/><circle cx="566.3" cy="355.8" r="2.1"/><circle cx="569.7" cy="354.7" r="2.1"/><circle cx="573.2" cy="349.0" r="2.1"/><circle cx="576.6" cy="342.0" r="2.1"/><circle cx="580.1" cy="345.9" r="2.1"/><circle cx="583.5" cy="338.1" r="2.1"/><circle cx="586.9" cy="336.3" r="2.1"/><circle cx="590.4" cy="333.0" r="2.1"/><circle cx="593.8" cy="331.8" r="2.1"/><circle cx="597.3" cy="319.9" r="2.1"/><circle cx="600.7" cy="320.8" r="2.1"/><circle cx="604.1" cy="303.9" r="2.1"/><circle cx="607.6" cy="295.6" r="2.1"/><circle cx="611.0" cy="288.8" r="2.1"/><circle cx="614.5" cy="274.8" r="2.1"/><circle cx="617.9" cy="256.9" r="2.1"/><circle cx="621.3" cy="239.9" r="2.1"/><circle cx="624.8" cy="213.5" r="2.1"/><circle cx="628.2" cy="179.4" r="2.1"/><circle cx="631.7" cy="148.6" r="2.1"/><circle cx="635.1" cy="116.2" r="2.1"/><circle cx="638.5" cy="122.6" r="2.1"/><circle cx="642.0" cy="120.3" r="2.1"/><circle cx="645.4" cy="138.5" r="2.1"/><circle cx="648.9" cy="149.8" r="2.1"/><circle cx="652.3" cy="161.7" r="2.1"/><circle cx="655.7" cy="170.4" r="2.1"/><circle cx="659.2" cy="188.6" r="2.1"/><circle cx="662.6" cy="201.8" r="2.1"/><circle cx="666.1" cy="202.1" r="2.1"/><circle cx="669.5" cy="211.8" r="2.1"/><circle cx="672.9" cy="224.0" r="2.1"/><circle cx="676.4" cy="236.1" r="2.1"/><circle cx="679.8" cy="238.4" r="2.1"/><circle cx="683.3" cy="247.8" r="2.1"/><circle cx="686.7" cy="246.8" r="2.1"/><circle cx="690.1" cy="259.5" r="2.1"/><circle cx="693.6" cy="268.1" r="2.1"/><circle cx="697.0" cy="294.1" r="2.1"/><circle cx="700.5" cy="310.1" r="2.1"/><circle cx="703.9" cy="321.9" r="2.1"/><circle cx="707.3" cy="330.7" r="2.1"/><circle cx="710.8" cy="347.9" r="2.1"/><circle cx="714.2" cy="363.4" r="2.1"/><circle cx="717.7" cy="380.4" r="2.1"/><circle cx="721.1" cy="400.4" r="2.1"/><circle cx="724.5" cy="403.1" r="2.1"/><circle cx="728.0" cy="411.8" r="2.1"/><circle cx="731.4" cy="421.5" r="2.1"/><circle cx="734.9" cy="427.6" r="2.1"/><circle cx="738.3" cy="425.1" r="2.1"/><circle cx="741.7" cy="430.7" r="2.1"/><circle cx="745.2" cy="436.9" r="2.1"/><circle cx="748.6" cy="437.6" r="2.1"/><circle cx="752.1" cy="439.2" r="2.1"/><circle cx="755.5" cy="444.9" r="2.1"/><circle cx="758.9" cy="439.5" r="2.1"/><circle cx="762.4" cy="443.2" r="2.1"/><circle cx="765.8" cy="442.3" r="2.1"/><circle cx="769.3" cy="448.3" r="2.1"/><circle cx="772.7" cy="438.0" r="2.1"/><circle cx="776.1" cy="441.7" r="2.1"/><circle cx="779.6" cy="442.0" r="2.1"/><circle cx="783.0" cy="445.5" r="2.1"/><circle cx="786.5" cy="445.2" r="2.1"/><circle cx="789.9" cy="447.5" r="2.1"/><circle cx="793.3" cy="438.5" r="2.1"/><circle cx="796.8" cy="445.3" r="2.1"/><circle cx="800.2" cy="442.2" r="2.1"/><circle cx="803.7" cy="441.2" r="2.1"/><circle cx="807.1" cy="445.0" r="2.1"/><circle cx="810.5" cy="440.9" r="2.1"/><circle cx="814.0" cy="437.6" r="2.1"/><circle cx="817.4" cy="442.9" r="2.1"/><circle cx="820.9" cy="439.8" r="2.1"/><circle cx="824.3" cy="442.5" r="2.1"/><circle cx="827.7" cy="445.8" r="2.1"/><circle cx="831.2" cy="445.8" r="2.1"/><circle cx="834.6" cy="449.8" r="2.1"/><circle cx="838.1" cy="444.7" r="2.1"/><circle cx="841.5" cy="440.9" r="2.1"/><circle cx="844.9" cy="443.5" r="2.1"/><circle cx="848.4" cy="443.2" r="2.1"/><circle cx="851.8" cy="442.5" r="2.1"/><circle cx="855.3" cy="447.6" r="2.1"/><circle cx="858.7" cy="444.6" r="2.1"/><circle cx="862.1" cy="440.9" r="2.1"/><circle cx="865.6" cy="449.0" r="2.1"/><circle cx="869.0" cy="446.8" r="2.1"/><circle cx="872.5" cy="448.4" r="2.1"/><circle cx="875.9" cy="447.9" r="2.1"/><circle cx="879.3" cy="449.6" r="2.1"/><circle cx="882.8" cy="448.1" r="2.1"/><circle cx="886.2" cy="451.8" r="2.1"/><circle cx="889.7" cy="449.6" r="2.1"/><circle cx="893.1" cy="449.7" r="2.1"/><circle cx="896.5" cy="450.0" r="2.1"/><circle cx="900.0" cy="444.7" r="2.1"/><circle cx="903.4" cy="448.6" r="2.1"/><circle cx="906.9" cy="448.4" r="2.1"/><circle cx="910.3" cy="449.9" r="2.1"/><circle cx="913.7" cy="445.4" r="2.1"/><circle cx="917.2" cy="454.3" r="2.1"/><circle cx="920.6" cy="449.9" r="2.1"/><circle cx="924.1" cy="446.1" r="2.1"/><circle cx="927.5" cy="444.7" r="2.1"/><circle cx="930.9" cy="449.0" r="2.1"/><circle cx="934.4" cy="449.7" r="2.1"/><circle cx="937.8" cy="447.9" r="2.1"/></g><g fill="#f44a22" stroke="#1e1e1e" stroke-width="0.45"><circle cx="-1.3" cy="445.2" r="2.1"/><circle cx="2.1" cy="442.4" r="2.1"/><circle cx="5.6" cy="445.0" r="2.1"/><circle cx="9.0" cy="440.1" r="2.1"/><circle cx="12.5" cy="441.1" r="2.1"/><circle cx="15.9" cy="443.2" r="2.1"/><circle cx="19.3" cy="446.9" r="2.1"/><circle cx="22.8" cy="435.1" r="2.1"/><circle cx="26.2" cy="435.7" r="2.1"/><circle cx="29.7" cy="433.6" r="2.1"/><circle cx="33.1" cy="437.4" r="2.1"/><circle cx="36.5" cy="430.5" r="2.1"/><circle cx="40.0" cy="431.5" r="2.1"/><circle cx="43.4" cy="431.9" r="2.1"/><circle cx="46.9" cy="428.0" r="2.1"/><circle cx="50.3" cy="427.1" r="2.1"/><circle cx="53.7" cy="428.2" r="2.1"/><circle cx="57.2" cy="422.8" r="2.1"/><circle cx="60.6" cy="424.5" r="2.1"/><circle cx="64.1" cy="427.3" r="2.1"/><circle cx="67.5" cy="428.7" r="2.1"/><circle cx="70.9" cy="427.3" r="2.1"/><circle cx="74.4" cy="422.1" r="2.1"/><circle cx="77.8" cy="425.8" r="2.1"/><circle cx="81.3" cy="429.3" r="2.1"/><circle cx="84.7" cy="428.2" r="2.1"/><circle cx="88.1" cy="425.9" r="2.1"/><circle cx="91.6" cy="422.9" r="2.1"/><circle cx="95.0" cy="426.9" r="2.1"/><circle cx="98.5" cy="422.5" r="2.1"/><circle cx="101.9" cy="420.0" r="2.1"/><circle cx="105.3" cy="420.4" r="2.1"/><circle cx="108.8" cy="426.7" r="2.1"/><circle cx="112.2" cy="422.2" r="2.1"/><circle cx="115.7" cy="424.5" r="2.1"/><circle cx="119.1" cy="418.6" r="2.1"/><circle cx="122.5" cy="422.0" r="2.1"/><circle cx="126.0" cy="415.9" r="2.1"/><circle cx="129.4" cy="416.1" r="2.1"/><circle cx="132.9" cy="423.1" r="2.1"/><circle cx="136.3" cy="416.4" r="2.1"/><circle cx="139.7" cy="411.2" r="2.1"/><circle cx="143.2" cy="411.2" r="2.1"/><circle cx="146.6" cy="411.3" r="2.1"/><circle cx="150.1" cy="412.9" r="2.1"/><circle cx="153.5" cy="406.3" r="2.1"/><circle cx="156.9" cy="401.2" r="2.1"/><circle cx="160.4" cy="404.8" r="2.1"/><circle cx="163.8" cy="404.6" r="2.1"/><circle cx="167.3" cy="403.8" r="2.1"/><circle cx="170.7" cy="406.6" r="2.1"/><circle cx="174.1" cy="402.3" r="2.1"/><circle cx="177.6" cy="402.7" r="2.1"/><circle cx="181.0" cy="394.7" r="2.1"/><circle cx="184.5" cy="399.2" r="2.1"/><circle cx="187.9" cy="401.3" r="2.1"/><circle cx="191.3" cy="395.0" r="2.1"/><circle cx="194.8" cy="391.4" r="2.1"/><circle cx="198.2" cy="389.1" r="2.1"/><circle cx="201.7" cy="392.6" r="2.1"/><circle cx="205.1" cy="381.7" r="2.1"/><circle cx="208.5" cy="382.4" r="2.1"/><circle cx="212.0" cy="382.2" r="2.1"/><circle cx="215.4" cy="380.9" r="2.1"/><circle cx="218.9" cy="374.6" r="2.1"/><circle cx="222.3" cy="374.8" r="2.1"/><circle cx="225.7" cy="370.5" r="2.1"/><circle cx="229.2" cy="368.7" r="2.1"/><circle cx="232.6" cy="363.4" r="2.1"/><circle cx="236.1" cy="355.3" r="2.1"/><circle cx="239.5" cy="354.6" r="2.1"/><circle cx="242.9" cy="353.2" r="2.1"/><circle cx="246.4" cy="342.0" r="2.1"/><circle cx="249.8" cy="339.8" r="2.1"/><circle cx="253.3" cy="338.2" r="2.1"/><circle cx="256.7" cy="327.1" r="2.1"/><circle cx="260.1" cy="326.9" r="2.1"/><circle cx="263.6" cy="318.0" r="2.1"/><circle cx="267.0" cy="322.0" r="2.1"/><circle cx="270.5" cy="322.3" r="2.1"/><circle cx="273.9" cy="317.2" r="2.1"/><circle cx="277.3" cy="303.9" r="2.1"/><circle cx="280.8" cy="301.9" r="2.1"/><circle cx="284.2" cy="293.5" r="2.1"/><circle cx="287.7" cy="285.7" r="2.1"/><circle cx="291.1" cy="282.9" r="2.1"/><circle cx="294.5" cy="262.9" r="2.1"/><circle cx="298.0" cy="265.1" r="2.1"/><circle cx="301.4" cy="255.2" r="2.1"/><circle cx="304.9" cy="254.2" r="2.1"/><circle cx="308.3" cy="234.3" r="2.1"/><circle cx="311.7" cy="213.5" r="2.1"/><circle cx="315.2" cy="202.6" r="2.1"/><circle cx="318.6" cy="191.0" r="2.1"/><circle cx="322.1" cy="176.6" r="2.1"/><circle cx="325.5" cy="169.2" r="2.1"/><circle cx="328.9" cy="153.7" r="2.1"/><circle cx="332.4" cy="134.0" r="2.1"/><circle cx="335.8" cy="138.0" r="2.1"/><circle cx="339.3" cy="129.3" r="2.1"/><circle cx="342.7" cy="119.7" r="2.1"/><circle cx="346.1" cy="113.2" r="2.1"/><circle cx="349.6" cy="111.9" r="2.1"/><circle cx="353.0" cy="98.6" r="2.1"/><circle cx="356.5" cy="100.8" r="2.1"/><circle cx="359.9" cy="111.8" r="2.1"/><circle cx="363.3" cy="127.0" r="2.1"/><circle cx="366.8" cy="122.6" r="2.1"/><circle cx="370.2" cy="143.7" r="2.1"/><circle cx="373.7" cy="144.9" r="2.1"/><circle cx="377.1" cy="152.9" r="2.1"/><circle cx="380.5" cy="173.1" r="2.1"/><circle cx="384.0" cy="175.8" r="2.1"/><circle cx="387.4" cy="179.4" r="2.1"/><circle cx="390.9" cy="193.4" r="2.1"/><circle cx="394.3" cy="210.2" r="2.1"/><circle cx="397.7" cy="222.4" r="2.1"/><circle cx="401.2" cy="226.2" r="2.1"/><circle cx="404.6" cy="239.9" r="2.1"/><circle cx="408.1" cy="247.9" r="2.1"/><circle cx="411.5" cy="247.8" r="2.1"/><circle cx="414.9" cy="257.5" r="2.1"/><circle cx="418.4" cy="261.4" r="2.1"/><circle cx="421.8" cy="264.9" r="2.1"/><circle cx="425.3" cy="270.1" r="2.1"/><circle cx="428.7" cy="277.2" r="2.1"/><circle cx="432.1" cy="281.8" r="2.1"/><circle cx="435.6" cy="284.1" r="2.1"/><circle cx="439.0" cy="289.0" r="2.1"/><circle cx="442.5" cy="299.2" r="2.1"/><circle cx="445.9" cy="299.8" r="2.1"/><circle cx="449.3" cy="306.5" r="2.1"/><circle cx="452.8" cy="311.5" r="2.1"/><circle cx="456.2" cy="312.8" r="2.1"/><circle cx="459.7" cy="322.8" r="2.1"/><circle cx="463.1" cy="314.8" r="2.1"/><circle cx="466.5" cy="324.4" r="2.1"/><circle cx="470.0" cy="323.0" r="2.1"/><circle cx="473.4" cy="333.5" r="2.1"/><circle cx="476.9" cy="335.4" r="2.1"/><circle cx="480.3" cy="324.5" r="2.1"/><circle cx="483.7" cy="330.5" r="2.1"/><circle cx="487.2" cy="338.0" r="2.1"/><circle cx="490.6" cy="339.5" r="2.1"/><circle cx="494.1" cy="340.3" r="2.1"/><circle cx="497.5" cy="338.4" r="2.1"/><circle cx="500.9" cy="341.2" r="2.1"/><circle cx="504.4" cy="341.7" r="2.1"/><circle cx="507.8" cy="338.2" r="2.1"/><circle cx="511.3" cy="341.2" r="2.1"/><circle cx="514.7" cy="328.4" r="2.1"/><circle cx="518.1" cy="338.1" r="2.1"/><circle cx="521.6" cy="331.4" r="2.1"/><circle cx="525.0" cy="338.1" r="2.1"/><circle cx="528.5" cy="333.1" r="2.1"/><circle cx="531.9" cy="330.1" r="2.1"/><circle cx="535.3" cy="334.4" r="2.1"/><circle cx="538.8" cy="329.7" r="2.1"/><circle cx="542.2" cy="329.7" r="2.1"/><circle cx="545.7" cy="327.3" r="2.1"/><circle cx="549.1" cy="332.8" r="2.1"/><circle cx="552.5" cy="333.1" r="2.1"/><circle cx="556.0" cy="331.5" r="2.1"/><circle cx="559.4" cy="323.6" r="2.1"/><circle cx="562.9" cy="324.3" r="2.1"/><circle cx="566.3" cy="316.9" r="2.1"/><circle cx="569.7" cy="313.1" r="2.1"/><circle cx="573.2" cy="312.4" r="2.1"/><circle cx="576.6" cy="311.1" r="2.1"/><circle cx="580.1" cy="302.5" r="2.1"/><circle cx="583.5" cy="298.8" r="2.1"/><circle cx="586.9" cy="295.0" r="2.1"/><circle cx="590.4" cy="291.7" r="2.1"/><circle cx="593.8" cy="283.2" r="2.1"/><circle cx="597.3" cy="284.2" r="2.1"/><circle cx="600.7" cy="271.2" r="2.1"/><circle cx="604.1" cy="266.1" r="2.1"/><circle cx="607.6" cy="250.1" r="2.1"/><circle cx="611.0" cy="242.1" r="2.1"/><circle cx="614.5" cy="228.1" r="2.1"/><circle cx="617.9" cy="217.0" r="2.1"/><circle cx="621.3" cy="219.3" r="2.1"/><circle cx="624.8" cy="202.4" r="2.1"/><circle cx="628.2" cy="198.5" r="2.1"/><circle cx="631.7" cy="177.0" r="2.1"/><circle cx="635.1" cy="151.9" r="2.1"/><circle cx="638.5" cy="134.6" r="2.1"/><circle cx="642.0" cy="128.6" r="2.1"/><circle cx="645.4" cy="118.5" r="2.1"/><circle cx="648.9" cy="110.1" r="2.1"/><circle cx="652.3" cy="103.6" r="2.1"/><circle cx="655.7" cy="102.1" r="2.1"/><circle cx="659.2" cy="117.2" r="2.1"/><circle cx="662.6" cy="114.4" r="2.1"/><circle cx="666.1" cy="133.7" r="2.1"/><circle cx="669.5" cy="134.5" r="2.1"/><circle cx="672.9" cy="140.0" r="2.1"/><circle cx="676.4" cy="147.7" r="2.1"/><circle cx="679.8" cy="155.9" r="2.1"/><circle cx="683.3" cy="156.9" r="2.1"/><circle cx="686.7" cy="173.2" r="2.1"/><circle cx="690.1" cy="194.8" r="2.1"/><circle cx="693.6" cy="209.4" r="2.1"/><circle cx="697.0" cy="231.8" r="2.1"/><circle cx="700.5" cy="270.2" r="2.1"/><circle cx="703.9" cy="282.4" r="2.1"/><circle cx="707.3" cy="309.5" r="2.1"/><circle cx="710.8" cy="319.2" r="2.1"/><circle cx="714.2" cy="342.4" r="2.1"/><circle cx="717.7" cy="355.2" r="2.1"/><circle cx="721.1" cy="371.4" r="2.1"/><circle cx="724.5" cy="386.3" r="2.1"/><circle cx="728.0" cy="400.1" r="2.1"/><circle cx="731.4" cy="402.4" r="2.1"/><circle cx="734.9" cy="408.4" r="2.1"/><circle cx="738.3" cy="409.6" r="2.1"/><circle cx="741.7" cy="419.0" r="2.1"/><circle cx="745.2" cy="419.2" r="2.1"/><circle cx="748.6" cy="424.2" r="2.1"/><circle cx="752.1" cy="423.0" r="2.1"/><circle cx="755.5" cy="430.1" r="2.1"/><circle cx="758.9" cy="420.2" r="2.1"/><circle cx="762.4" cy="426.9" r="2.1"/><circle cx="765.8" cy="432.0" r="2.1"/><circle cx="769.3" cy="429.7" r="2.1"/><circle cx="772.7" cy="429.7" r="2.1"/><circle cx="776.1" cy="432.4" r="2.1"/><circle cx="779.6" cy="430.0" r="2.1"/><circle cx="783.0" cy="435.5" r="2.1"/><circle cx="786.5" cy="443.5" r="2.1"/><circle cx="789.9" cy="440.6" r="2.1"/><circle cx="793.3" cy="434.8" r="2.1"/><circle cx="796.8" cy="436.5" r="2.1"/><circle cx="800.2" cy="438.7" r="2.1"/><circle cx="803.7" cy="443.3" r="2.1"/><circle cx="807.1" cy="438.1" r="2.1"/><circle cx="810.5" cy="438.8" r="2.1"/><circle cx="814.0" cy="443.8" r="2.1"/><circle cx="817.4" cy="444.0" r="2.1"/><circle cx="820.9" cy="440.5" r="2.1"/><circle cx="824.3" cy="438.6" r="2.1"/><circle cx="827.7" cy="437.6" r="2.1"/><circle cx="831.2" cy="440.4" r="2.1"/><circle cx="834.6" cy="436.1" r="2.1"/><circle cx="838.1" cy="445.3" r="2.1"/><circle cx="841.5" cy="441.4" r="2.1"/><circle cx="844.9" cy="445.0" r="2.1"/><circle cx="848.4" cy="449.4" r="2.1"/><circle cx="851.8" cy="447.6" r="2.1"/><circle cx="855.3" cy="440.8" r="2.1"/><circle cx="858.7" cy="446.9" r="2.1"/><circle cx="862.1" cy="447.9" r="2.1"/><circle cx="865.6" cy="442.4" r="2.1"/><circle cx="869.0" cy="441.9" r="2.1"/><circle cx="872.5" cy="444.6" r="2.1"/><circle cx="875.9" cy="440.3" r="2.1"/><circle cx="879.3" cy="449.5" r="2.1"/><circle cx="882.8" cy="438.2" r="2.1"/><circle cx="886.2" cy="442.2" r="2.1"/><circle cx="889.7" cy="444.8" r="2.1"/><circle cx="893.1" cy="445.0" r="2.1"/><circle cx="896.5" cy="446.4" r="2.1"/><circle cx="900.0" cy="446.8" r="2.1"/><circle cx="903.4" cy="445.6" r="2.1"/><circle cx="906.9" cy="449.8" r="2.1"/><circle cx="910.3" cy="440.2" r="2.1"/><circle cx="913.7" cy="446.8" r="2.1"/><circle cx="917.2" cy="444.8" r="2.1"/><circle cx="920.6" cy="447.5" r="2.1"/><circle cx="924.1" cy="448.0" r="2.1"/><circle cx="927.5" cy="444.8" r="2.1"/><circle cx="930.9" cy="445.8" r="2.1"/><circle cx="934.4" cy="450.2" r="2.1"/><circle cx="937.8" cy="449.0" r="2.1"/></g><g fill="#f0469a" stroke="#1e1e1e" stroke-width="0.45"><circle cx="-1.3" cy="450.0" r="2.1"/><circle cx="2.1" cy="457.8" r="2.1"/><circle cx="5.6" cy="458.3" r="2.1"/><circle cx="9.0" cy="447.0" r="2.1"/><circle cx="12.5" cy="451.9" r="2.1"/><circle cx="15.9" cy="458.1" r="2.1"/><circle cx="19.3" cy="452.8" r="2.1"/><circle cx="22.8" cy="450.8" r="2.1"/><circle cx="26.2" cy="449.3" r="2.1"/><circle cx="29.7" cy="448.0" r="2.1"/><circle cx="33.1" cy="448.7" r="2.1"/><circle cx="36.5" cy="447.5" r="2.1"/><circle cx="40.0" cy="451.0" r="2.1"/><circle cx="43.4" cy="447.4" r="2.1"/><circle cx="46.9" cy="446.9" r="2.1"/><circle cx="50.3" cy="444.4" r="2.1"/><circle cx="53.7" cy="447.4" r="2.1"/><circle cx="57.2" cy="444.5" r="2.1"/><circle cx="60.6" cy="446.1" r="2.1"/><circle cx="64.1" cy="449.3" r="2.1"/><circle cx="67.5" cy="446.9" r="2.1"/><circle cx="70.9" cy="446.9" r="2.1"/><circle cx="74.4" cy="446.0" r="2.1"/><circle cx="77.8" cy="444.7" r="2.1"/><circle cx="81.3" cy="443.7" r="2.1"/><circle cx="84.7" cy="442.7" r="2.1"/><circle cx="88.1" cy="445.5" r="2.1"/><circle cx="91.6" cy="439.3" r="2.1"/><circle cx="95.0" cy="445.7" r="2.1"/><circle cx="98.5" cy="440.8" r="2.1"/><circle cx="101.9" cy="437.6" r="2.1"/><circle cx="105.3" cy="437.4" r="2.1"/><circle cx="108.8" cy="436.0" r="2.1"/><circle cx="112.2" cy="437.6" r="2.1"/><circle cx="115.7" cy="434.0" r="2.1"/><circle cx="119.1" cy="438.7" r="2.1"/><circle cx="122.5" cy="432.1" r="2.1"/><circle cx="126.0" cy="426.9" r="2.1"/><circle cx="129.4" cy="430.9" r="2.1"/><circle cx="132.9" cy="426.3" r="2.1"/><circle cx="136.3" cy="431.6" r="2.1"/><circle cx="139.7" cy="434.3" r="2.1"/><circle cx="143.2" cy="432.3" r="2.1"/><circle cx="146.6" cy="425.6" r="2.1"/><circle cx="150.1" cy="426.7" r="2.1"/><circle cx="153.5" cy="433.9" r="2.1"/><circle cx="156.9" cy="428.9" r="2.1"/><circle cx="160.4" cy="427.4" r="2.1"/><circle cx="163.8" cy="430.0" r="2.1"/><circle cx="167.3" cy="433.8" r="2.1"/><circle cx="170.7" cy="429.7" r="2.1"/><circle cx="174.1" cy="425.6" r="2.1"/><circle cx="177.6" cy="425.7" r="2.1"/><circle cx="181.0" cy="426.1" r="2.1"/><circle cx="184.5" cy="421.7" r="2.1"/><circle cx="187.9" cy="419.9" r="2.1"/><circle cx="191.3" cy="422.7" r="2.1"/><circle cx="194.8" cy="418.9" r="2.1"/><circle cx="198.2" cy="421.0" r="2.1"/><circle cx="201.7" cy="420.8" r="2.1"/><circle cx="205.1" cy="427.2" r="2.1"/><circle cx="208.5" cy="416.5" r="2.1"/><circle cx="212.0" cy="418.1" r="2.1"/><circle cx="215.4" cy="417.3" r="2.1"/><circle cx="218.9" cy="418.5" r="2.1"/><circle cx="222.3" cy="419.8" r="2.1"/><circle cx="225.7" cy="414.3" r="2.1"/><circle cx="229.2" cy="412.5" r="2.1"/><circle cx="232.6" cy="409.3" r="2.1"/><circle cx="236.1" cy="410.8" r="2.1"/><circle cx="239.5" cy="414.7" r="2.1"/><circle cx="242.9" cy="411.5" r="2.1"/><circle cx="246.4" cy="406.3" r="2.1"/><circle cx="249.8" cy="406.5" r="2.1"/><circle cx="253.3" cy="405.9" r="2.1"/><circle cx="256.7" cy="405.6" r="2.1"/><circle cx="260.1" cy="400.2" r="2.1"/><circle cx="263.6" cy="398.8" r="2.1"/><circle cx="267.0" cy="388.0" r="2.1"/><circle cx="270.5" cy="383.3" r="2.1"/><circle cx="273.9" cy="387.3" r="2.1"/><circle cx="277.3" cy="372.5" r="2.1"/><circle cx="280.8" cy="377.0" r="2.1"/><circle cx="284.2" cy="377.1" r="2.1"/><circle cx="287.7" cy="373.4" r="2.1"/><circle cx="291.1" cy="370.2" r="2.1"/><circle cx="294.5" cy="370.9" r="2.1"/><circle cx="298.0" cy="366.5" r="2.1"/><circle cx="301.4" cy="356.5" r="2.1"/><circle cx="304.9" cy="339.7" r="2.1"/><circle cx="308.3" cy="335.8" r="2.1"/><circle cx="311.7" cy="326.1" r="2.1"/><circle cx="315.2" cy="323.1" r="2.1"/><circle cx="318.6" cy="319.3" r="2.1"/><circle cx="322.1" cy="307.7" r="2.1"/><circle cx="325.5" cy="294.8" r="2.1"/><circle cx="328.9" cy="277.3" r="2.1"/><circle cx="332.4" cy="272.6" r="2.1"/><circle cx="335.8" cy="264.4" r="2.1"/><circle cx="339.3" cy="257.2" r="2.1"/><circle cx="342.7" cy="251.4" r="2.1"/><circle cx="346.1" cy="238.2" r="2.1"/><circle cx="349.6" cy="233.9" r="2.1"/><circle cx="353.0" cy="236.7" r="2.1"/><circle cx="356.5" cy="226.3" r="2.1"/><circle cx="359.9" cy="237.8" r="2.1"/><circle cx="363.3" cy="251.0" r="2.1"/><circle cx="366.8" cy="268.1" r="2.1"/><circle cx="370.2" cy="272.9" r="2.1"/><circle cx="373.7" cy="284.4" r="2.1"/><circle cx="377.1" cy="294.4" r="2.1"/><circle cx="380.5" cy="304.0" r="2.1"/><circle cx="384.0" cy="310.8" r="2.1"/><circle cx="387.4" cy="313.5" r="2.1"/><circle cx="390.9" cy="320.0" r="2.1"/><circle cx="394.3" cy="324.5" r="2.1"/><circle cx="397.7" cy="334.7" r="2.1"/><circle cx="401.2" cy="335.5" r="2.1"/><circle cx="404.6" cy="341.5" r="2.1"/><circle cx="408.1" cy="348.4" r="2.1"/><circle cx="411.5" cy="344.8" r="2.1"/><circle cx="414.9" cy="342.0" r="2.1"/><circle cx="418.4" cy="345.7" r="2.1"/><circle cx="421.8" cy="345.0" r="2.1"/><circle cx="425.3" cy="347.4" r="2.1"/><circle cx="428.7" cy="357.6" r="2.1"/><circle cx="432.1" cy="355.2" r="2.1"/><circle cx="435.6" cy="350.5" r="2.1"/><circle cx="439.0" cy="359.5" r="2.1"/><circle cx="442.5" cy="363.1" r="2.1"/><circle cx="445.9" cy="359.1" r="2.1"/><circle cx="449.3" cy="359.6" r="2.1"/><circle cx="452.8" cy="362.4" r="2.1"/><circle cx="456.2" cy="366.1" r="2.1"/><circle cx="459.7" cy="368.6" r="2.1"/><circle cx="463.1" cy="371.2" r="2.1"/><circle cx="466.5" cy="372.1" r="2.1"/><circle cx="470.0" cy="372.8" r="2.1"/><circle cx="473.4" cy="374.2" r="2.1"/><circle cx="476.9" cy="372.5" r="2.1"/><circle cx="480.3" cy="365.8" r="2.1"/><circle cx="483.7" cy="371.2" r="2.1"/><circle cx="487.2" cy="373.4" r="2.1"/><circle cx="490.6" cy="371.6" r="2.1"/><circle cx="494.1" cy="376.7" r="2.1"/><circle cx="497.5" cy="373.0" r="2.1"/><circle cx="500.9" cy="371.6" r="2.1"/><circle cx="504.4" cy="379.5" r="2.1"/><circle cx="507.8" cy="376.3" r="2.1"/><circle cx="511.3" cy="374.2" r="2.1"/><circle cx="514.7" cy="376.0" r="2.1"/><circle cx="518.1" cy="375.9" r="2.1"/><circle cx="521.6" cy="372.9" r="2.1"/><circle cx="525.0" cy="362.8" r="2.1"/><circle cx="528.5" cy="368.3" r="2.1"/><circle cx="531.9" cy="368.5" r="2.1"/><circle cx="535.3" cy="366.1" r="2.1"/><circle cx="538.8" cy="369.6" r="2.1"/><circle cx="542.2" cy="372.5" r="2.1"/><circle cx="545.7" cy="366.2" r="2.1"/><circle cx="549.1" cy="363.4" r="2.1"/><circle cx="552.5" cy="373.3" r="2.1"/><circle cx="556.0" cy="363.3" r="2.1"/><circle cx="559.4" cy="359.1" r="2.1"/><circle cx="562.9" cy="362.7" r="2.1"/><circle cx="566.3" cy="361.8" r="2.1"/><circle cx="569.7" cy="356.4" r="2.1"/><circle cx="573.2" cy="360.1" r="2.1"/><circle cx="576.6" cy="354.4" r="2.1"/><circle cx="580.1" cy="351.6" r="2.1"/><circle cx="583.5" cy="354.3" r="2.1"/><circle cx="586.9" cy="355.2" r="2.1"/><circle cx="590.4" cy="348.4" r="2.1"/><circle cx="593.8" cy="346.3" r="2.1"/><circle cx="597.3" cy="337.8" r="2.1"/><circle cx="600.7" cy="341.3" r="2.1"/><circle cx="604.1" cy="321.3" r="2.1"/><circle cx="607.6" cy="322.6" r="2.1"/><circle cx="611.0" cy="312.0" r="2.1"/><circle cx="614.5" cy="303.7" r="2.1"/><circle cx="617.9" cy="290.9" r="2.1"/><circle cx="621.3" cy="274.1" r="2.1"/><circle cx="624.8" cy="256.7" r="2.1"/><circle cx="628.2" cy="230.7" r="2.1"/><circle cx="631.7" cy="207.1" r="2.1"/><circle cx="635.1" cy="194.5" r="2.1"/><circle cx="638.5" cy="188.3" r="2.1"/><circle cx="642.0" cy="185.8" r="2.1"/><circle cx="645.4" cy="199.2" r="2.1"/><circle cx="648.9" cy="205.9" r="2.1"/><circle cx="652.3" cy="227.5" r="2.1"/><circle cx="655.7" cy="249.9" r="2.1"/><circle cx="659.2" cy="263.0" r="2.1"/><circle cx="662.6" cy="265.1" r="2.1"/><circle cx="666.1" cy="267.7" r="2.1"/><circle cx="669.5" cy="267.9" r="2.1"/><circle cx="672.9" cy="284.3" r="2.1"/><circle cx="676.4" cy="283.2" r="2.1"/><circle cx="679.8" cy="299.6" r="2.1"/><circle cx="683.3" cy="302.6" r="2.1"/><circle cx="686.7" cy="312.5" r="2.1"/><circle cx="690.1" cy="320.4" r="2.1"/><circle cx="693.6" cy="335.4" r="2.1"/><circle cx="697.0" cy="346.7" r="2.1"/><circle cx="700.5" cy="355.4" r="2.1"/><circle cx="703.9" cy="366.4" r="2.1"/><circle cx="707.3" cy="376.2" r="2.1"/><circle cx="710.8" cy="392.6" r="2.1"/><circle cx="714.2" cy="411.7" r="2.1"/><circle cx="717.7" cy="410.3" r="2.1"/><circle cx="721.1" cy="424.6" r="2.1"/><circle cx="724.5" cy="428.7" r="2.1"/><circle cx="728.0" cy="437.5" r="2.1"/><circle cx="731.4" cy="444.1" r="2.1"/><circle cx="734.9" cy="445.9" r="2.1"/><circle cx="738.3" cy="451.0" r="2.1"/><circle cx="741.7" cy="444.1" r="2.1"/><circle cx="745.2" cy="451.9" r="2.1"/><circle cx="748.6" cy="446.7" r="2.1"/><circle cx="752.1" cy="450.2" r="2.1"/><circle cx="755.5" cy="448.7" r="2.1"/><circle cx="758.9" cy="440.4" r="2.1"/><circle cx="762.4" cy="446.1" r="2.1"/><circle cx="765.8" cy="449.4" r="2.1"/><circle cx="769.3" cy="453.7" r="2.1"/><circle cx="772.7" cy="450.4" r="2.1"/><circle cx="776.1" cy="450.8" r="2.1"/><circle cx="779.6" cy="446.3" r="2.1"/><circle cx="783.0" cy="455.1" r="2.1"/><circle cx="786.5" cy="456.6" r="2.1"/><circle cx="789.9" cy="451.8" r="2.1"/><circle cx="793.3" cy="451.5" r="2.1"/><circle cx="796.8" cy="447.9" r="2.1"/><circle cx="800.2" cy="455.5" r="2.1"/><circle cx="803.7" cy="461.0" r="2.1"/><circle cx="807.1" cy="455.2" r="2.1"/><circle cx="810.5" cy="456.9" r="2.1"/><circle cx="814.0" cy="454.9" r="2.1"/><circle cx="817.4" cy="450.5" r="2.1"/><circle cx="820.9" cy="457.3" r="2.1"/><circle cx="824.3" cy="449.9" r="2.1"/><circle cx="827.7" cy="452.9" r="2.1"/><circle cx="831.2" cy="454.4" r="2.1"/><circle cx="834.6" cy="456.3" r="2.1"/><circle cx="838.1" cy="455.0" r="2.1"/><circle cx="841.5" cy="455.0" r="2.1"/><circle cx="844.9" cy="451.7" r="2.1"/><circle cx="848.4" cy="450.2" r="2.1"/><circle cx="851.8" cy="454.2" r="2.1"/><circle cx="855.3" cy="452.0" r="2.1"/><circle cx="858.7" cy="450.4" r="2.1"/><circle cx="862.1" cy="450.5" r="2.1"/><circle cx="865.6" cy="452.9" r="2.1"/><circle cx="869.0" cy="449.0" r="2.1"/><circle cx="872.5" cy="450.5" r="2.1"/><circle cx="875.9" cy="449.7" r="2.1"/><circle cx="879.3" cy="455.1" r="2.1"/><circle cx="882.8" cy="455.8" r="2.1"/><circle cx="886.2" cy="460.6" r="2.1"/><circle cx="889.7" cy="450.4" r="2.1"/><circle cx="893.1" cy="452.9" r="2.1"/><circle cx="896.5" cy="457.6" r="2.1"/><circle cx="900.0" cy="454.4" r="2.1"/><circle cx="903.4" cy="454.2" r="2.1"/><circle cx="906.9" cy="460.4" r="2.1"/><circle cx="910.3" cy="454.6" r="2.1"/><circle cx="913.7" cy="452.4" r="2.1"/><circle cx="917.2" cy="452.1" r="2.1"/><circle cx="920.6" cy="457.1" r="2.1"/><circle cx="924.1" cy="457.2" r="2.1"/><circle cx="927.5" cy="452.5" r="2.1"/><circle cx="930.9" cy="453.9" r="2.1"/><circle cx="934.4" cy="458.5" r="2.1"/><circle cx="937.8" cy="458.7" r="2.1"/></g><g fill="#de5cf0" stroke="#1e1e1e" stroke-width="0.45"><circle cx="-1.3" cy="457.1" r="2.1"/><circle cx="2.1" cy="460.6" r="2.1"/><circle cx="5.6" cy="460.1" r="2.1"/><circle cx="9.0" cy="452.9" r="2.1"/><circle cx="12.5" cy="456.8" r="2.1"/><circle cx="15.9" cy="458.6" r="2.1"/><circle cx="19.3" cy="455.4" r="2.1"/><circle cx="22.8" cy="450.5" r="2.1"/><circle cx="26.2" cy="455.6" r="2.1"/><circle cx="29.7" cy="458.2" r="2.1"/><circle cx="33.1" cy="460.3" r="2.1"/><circle cx="36.5" cy="449.0" r="2.1"/><circle cx="40.0" cy="462.6" r="2.1"/><circle cx="43.4" cy="451.4" r="2.1"/><circle cx="46.9" cy="457.1" r="2.1"/><circle cx="50.3" cy="457.6" r="2.1"/><circle cx="53.7" cy="456.7" r="2.1"/><circle cx="57.2" cy="454.1" r="2.1"/><circle cx="60.6" cy="450.1" r="2.1"/><circle cx="64.1" cy="455.1" r="2.1"/><circle cx="67.5" cy="451.0" r="2.1"/><circle cx="70.9" cy="445.6" r="2.1"/><circle cx="74.4" cy="461.1" r="2.1"/><circle cx="77.8" cy="454.7" r="2.1"/><circle cx="81.3" cy="457.8" r="2.1"/><circle cx="84.7" cy="449.6" r="2.1"/><circle cx="88.1" cy="456.4" r="2.1"/><circle cx="91.6" cy="456.6" r="2.1"/><circle cx="95.0" cy="456.3" r="2.1"/><circle cx="98.5" cy="451.5" r="2.1"/><circle cx="101.9" cy="447.9" r="2.1"/><circle cx="105.3" cy="450.7" r="2.1"/><circle cx="108.8" cy="444.6" r="2.1"/><circle cx="112.2" cy="445.9" r="2.1"/><circle cx="115.7" cy="451.0" r="2.1"/><circle cx="119.1" cy="447.6" r="2.1"/><circle cx="122.5" cy="449.9" r="2.1"/><circle cx="126.0" cy="449.9" r="2.1"/><circle cx="129.4" cy="455.7" r="2.1"/><circle cx="132.9" cy="453.7" r="2.1"/><circle cx="136.3" cy="449.6" r="2.1"/><circle cx="139.7" cy="453.1" r="2.1"/><circle cx="143.2" cy="447.0" r="2.1"/><circle cx="146.6" cy="448.2" r="2.1"/><circle cx="150.1" cy="451.7" r="2.1"/><circle cx="153.5" cy="445.1" r="2.1"/><circle cx="156.9" cy="447.7" r="2.1"/><circle cx="160.4" cy="444.4" r="2.1"/><circle cx="163.8" cy="448.4" r="2.1"/><circle cx="167.3" cy="452.6" r="2.1"/><circle cx="170.7" cy="445.3" r="2.1"/><circle cx="174.1" cy="447.9" r="2.1"/><circle cx="177.6" cy="444.4" r="2.1"/><circle cx="181.0" cy="443.4" r="2.1"/><circle cx="184.5" cy="442.9" r="2.1"/><circle cx="187.9" cy="450.6" r="2.1"/><circle cx="191.3" cy="453.0" r="2.1"/><circle cx="194.8" cy="446.8" r="2.1"/><circle cx="198.2" cy="442.5" r="2.1"/><circle cx="201.7" cy="446.0" r="2.1"/><circle cx="205.1" cy="442.1" r="2.1"/><circle cx="208.5" cy="444.7" r="2.1"/><circle cx="212.0" cy="442.4" r="2.1"/><circle cx="215.4" cy="441.6" r="2.1"/><circle cx="218.9" cy="441.8" r="2.1"/><circle cx="222.3" cy="437.4" r="2.1"/><circle cx="225.7" cy="437.0" r="2.1"/><circle cx="229.2" cy="432.1" r="2.1"/><circle cx="232.6" cy="435.0" r="2.1"/><circle cx="236.1" cy="431.1" r="2.1"/><circle cx="239.5" cy="434.1" r="2.1"/><circle cx="242.9" cy="430.7" r="2.1"/><circle cx="246.4" cy="433.0" r="2.1"/><circle cx="249.8" cy="432.8" r="2.1"/><circle cx="253.3" cy="425.1" r="2.1"/><circle cx="256.7" cy="424.9" r="2.1"/><circle cx="260.1" cy="422.4" r="2.1"/><circle cx="263.6" cy="425.6" r="2.1"/><circle cx="267.0" cy="426.5" r="2.1"/><circle cx="270.5" cy="421.8" r="2.1"/><circle cx="273.9" cy="416.0" r="2.1"/><circle cx="277.3" cy="419.6" r="2.1"/><circle cx="280.8" cy="407.5" r="2.1"/><circle cx="284.2" cy="413.8" r="2.1"/><circle cx="287.7" cy="403.6" r="2.1"/><circle cx="291.1" cy="393.4" r="2.1"/><circle cx="294.5" cy="407.7" r="2.1"/><circle cx="298.0" cy="400.9" r="2.1"/><circle cx="301.4" cy="389.0" r="2.1"/><circle cx="304.9" cy="389.5" r="2.1"/><circle cx="308.3" cy="382.6" r="2.1"/><circle cx="311.7" cy="376.9" r="2.1"/><circle cx="315.2" cy="364.6" r="2.1"/><circle cx="318.6" cy="360.4" r="2.1"/><circle cx="322.1" cy="357.5" r="2.1"/><circle cx="325.5" cy="349.8" r="2.1"/><circle cx="328.9" cy="346.8" r="2.1"/><circle cx="332.4" cy="340.0" r="2.1"/><circle cx="335.8" cy="347.7" r="2.1"/><circle cx="339.3" cy="336.2" r="2.1"/><circle cx="342.7" cy="339.3" r="2.1"/><circle cx="346.1" cy="331.3" r="2.1"/><circle cx="349.6" cy="334.2" r="2.1"/><circle cx="353.0" cy="344.1" r="2.1"/><circle cx="356.5" cy="336.5" r="2.1"/><circle cx="359.9" cy="342.4" r="2.1"/><circle cx="363.3" cy="340.9" r="2.1"/><circle cx="366.8" cy="338.3" r="2.1"/><circle cx="370.2" cy="341.7" r="2.1"/><circle cx="373.7" cy="342.7" r="2.1"/><circle cx="377.1" cy="347.7" r="2.1"/><circle cx="380.5" cy="358.0" r="2.1"/><circle cx="384.0" cy="363.6" r="2.1"/><circle cx="387.4" cy="365.4" r="2.1"/><circle cx="390.9" cy="370.2" r="2.1"/><circle cx="394.3" cy="380.2" r="2.1"/><circle cx="397.7" cy="383.6" r="2.1"/><circle cx="401.2" cy="389.1" r="2.1"/><circle cx="404.6" cy="396.0" r="2.1"/><circle cx="408.1" cy="391.3" r="2.1"/><circle cx="411.5" cy="389.8" r="2.1"/><circle cx="414.9" cy="390.4" r="2.1"/><circle cx="418.4" cy="388.6" r="2.1"/><circle cx="421.8" cy="388.7" r="2.1"/><circle cx="425.3" cy="388.7" r="2.1"/><circle cx="428.7" cy="391.0" r="2.1"/><circle cx="432.1" cy="391.2" r="2.1"/><circle cx="435.6" cy="395.5" r="2.1"/><circle cx="439.0" cy="392.6" r="2.1"/><circle cx="442.5" cy="394.2" r="2.1"/><circle cx="445.9" cy="391.9" r="2.1"/><circle cx="449.3" cy="402.2" r="2.1"/><circle cx="452.8" cy="399.5" r="2.1"/><circle cx="456.2" cy="404.7" r="2.1"/><circle cx="459.7" cy="402.5" r="2.1"/><circle cx="463.1" cy="405.7" r="2.1"/><circle cx="466.5" cy="401.1" r="2.1"/><circle cx="470.0" cy="405.2" r="2.1"/><circle cx="473.4" cy="412.6" r="2.1"/><circle cx="476.9" cy="401.0" r="2.1"/><circle cx="480.3" cy="409.7" r="2.1"/><circle cx="483.7" cy="412.4" r="2.1"/><circle cx="487.2" cy="409.3" r="2.1"/><circle cx="490.6" cy="411.4" r="2.1"/><circle cx="494.1" cy="414.1" r="2.1"/><circle cx="497.5" cy="408.9" r="2.1"/><circle cx="500.9" cy="413.4" r="2.1"/><circle cx="504.4" cy="410.2" r="2.1"/><circle cx="507.8" cy="411.9" r="2.1"/><circle cx="511.3" cy="412.4" r="2.1"/><circle cx="514.7" cy="412.1" r="2.1"/><circle cx="518.1" cy="410.7" r="2.1"/><circle cx="521.6" cy="409.5" r="2.1"/><circle cx="525.0" cy="402.1" r="2.1"/><circle cx="528.5" cy="412.7" r="2.1"/><circle cx="531.9" cy="409.5" r="2.1"/><circle cx="535.3" cy="407.5" r="2.1"/><circle cx="538.8" cy="403.5" r="2.1"/><circle cx="542.2" cy="403.9" r="2.1"/><circle cx="545.7" cy="406.2" r="2.1"/><circle cx="549.1" cy="406.2" r="2.1"/><circle cx="552.5" cy="399.7" r="2.1"/><circle cx="556.0" cy="408.1" r="2.1"/><circle cx="559.4" cy="415.7" r="2.1"/><circle cx="562.9" cy="400.5" r="2.1"/><circle cx="566.3" cy="409.7" r="2.1"/><circle cx="569.7" cy="405.8" r="2.1"/><circle cx="573.2" cy="402.0" r="2.1"/><circle cx="576.6" cy="404.7" r="2.1"/><circle cx="580.1" cy="394.3" r="2.1"/><circle cx="583.5" cy="397.8" r="2.1"/><circle cx="586.9" cy="401.4" r="2.1"/><circle cx="590.4" cy="395.1" r="2.1"/><circle cx="593.8" cy="393.4" r="2.1"/><circle cx="597.3" cy="392.9" r="2.1"/><circle cx="600.7" cy="388.4" r="2.1"/><circle cx="604.1" cy="392.5" r="2.1"/><circle cx="607.6" cy="381.5" r="2.1"/><circle cx="611.0" cy="383.2" r="2.1"/><circle cx="614.5" cy="364.3" r="2.1"/><circle cx="617.9" cy="358.0" r="2.1"/><circle cx="621.3" cy="342.1" r="2.1"/><circle cx="624.8" cy="319.5" r="2.1"/><circle cx="628.2" cy="314.0" r="2.1"/><circle cx="631.7" cy="287.8" r="2.1"/><circle cx="635.1" cy="269.8" r="2.1"/><circle cx="638.5" cy="268.9" r="2.1"/><circle cx="642.0" cy="265.4" r="2.1"/><circle cx="645.4" cy="278.3" r="2.1"/><circle cx="648.9" cy="305.2" r="2.1"/><circle cx="652.3" cy="310.5" r="2.1"/><circle cx="655.7" cy="325.6" r="2.1"/><circle cx="659.2" cy="336.6" r="2.1"/><circle cx="662.6" cy="346.3" r="2.1"/><circle cx="666.1" cy="355.3" r="2.1"/><circle cx="669.5" cy="364.7" r="2.1"/><circle cx="672.9" cy="368.0" r="2.1"/><circle cx="676.4" cy="368.8" r="2.1"/><circle cx="679.8" cy="370.6" r="2.1"/><circle cx="683.3" cy="369.4" r="2.1"/><circle cx="686.7" cy="368.3" r="2.1"/><circle cx="690.1" cy="383.4" r="2.1"/><circle cx="693.6" cy="385.1" r="2.1"/><circle cx="697.0" cy="388.8" r="2.1"/><circle cx="700.5" cy="397.0" r="2.1"/><circle cx="703.9" cy="406.8" r="2.1"/><circle cx="707.3" cy="411.0" r="2.1"/><circle cx="710.8" cy="411.3" r="2.1"/><circle cx="714.2" cy="412.6" r="2.1"/><circle cx="717.7" cy="420.1" r="2.1"/><circle cx="721.1" cy="419.7" r="2.1"/><circle cx="724.5" cy="425.4" r="2.1"/><circle cx="728.0" cy="436.5" r="2.1"/><circle cx="731.4" cy="436.6" r="2.1"/><circle cx="734.9" cy="442.3" r="2.1"/><circle cx="738.3" cy="447.7" r="2.1"/><circle cx="741.7" cy="448.7" r="2.1"/><circle cx="745.2" cy="449.5" r="2.1"/><circle cx="748.6" cy="457.5" r="2.1"/><circle cx="752.1" cy="453.4" r="2.1"/><circle cx="755.5" cy="450.6" r="2.1"/><circle cx="758.9" cy="454.1" r="2.1"/><circle cx="762.4" cy="453.4" r="2.1"/><circle cx="765.8" cy="449.8" r="2.1"/><circle cx="769.3" cy="452.9" r="2.1"/><circle cx="772.7" cy="452.4" r="2.1"/><circle cx="776.1" cy="447.3" r="2.1"/><circle cx="779.6" cy="452.9" r="2.1"/><circle cx="783.0" cy="452.9" r="2.1"/><circle cx="786.5" cy="452.7" r="2.1"/><circle cx="789.9" cy="449.3" r="2.1"/><circle cx="793.3" cy="453.4" r="2.1"/><circle cx="796.8" cy="454.6" r="2.1"/><circle cx="800.2" cy="455.3" r="2.1"/><circle cx="803.7" cy="451.7" r="2.1"/><circle cx="807.1" cy="457.0" r="2.1"/><circle cx="810.5" cy="451.6" r="2.1"/><circle cx="814.0" cy="454.6" r="2.1"/><circle cx="817.4" cy="459.3" r="2.1"/><circle cx="820.9" cy="453.3" r="2.1"/><circle cx="824.3" cy="454.0" r="2.1"/><circle cx="827.7" cy="458.8" r="2.1"/><circle cx="831.2" cy="454.5" r="2.1"/><circle cx="834.6" cy="454.8" r="2.1"/><circle cx="838.1" cy="456.4" r="2.1"/><circle cx="841.5" cy="459.0" r="2.1"/><circle cx="844.9" cy="449.3" r="2.1"/><circle cx="848.4" cy="453.5" r="2.1"/><circle cx="851.8" cy="453.0" r="2.1"/><circle cx="855.3" cy="452.9" r="2.1"/><circle cx="858.7" cy="453.6" r="2.1"/><circle cx="862.1" cy="453.7" r="2.1"/><circle cx="865.6" cy="457.2" r="2.1"/><circle cx="869.0" cy="453.7" r="2.1"/><circle cx="872.5" cy="456.8" r="2.1"/><circle cx="875.9" cy="457.7" r="2.1"/><circle cx="879.3" cy="454.4" r="2.1"/><circle cx="882.8" cy="457.0" r="2.1"/><circle cx="886.2" cy="461.6" r="2.1"/><circle cx="889.7" cy="457.8" r="2.1"/><circle cx="893.1" cy="455.0" r="2.1"/><circle cx="896.5" cy="456.7" r="2.1"/><circle cx="900.0" cy="454.3" r="2.1"/><circle cx="903.4" cy="458.0" r="2.1"/><circle cx="906.9" cy="459.9" r="2.1"/><circle cx="910.3" cy="455.1" r="2.1"/><circle cx="913.7" cy="457.1" r="2.1"/><circle cx="917.2" cy="461.2" r="2.1"/><circle cx="920.6" cy="456.7" r="2.1"/><circle cx="924.1" cy="458.9" r="2.1"/><circle cx="927.5" cy="455.5" r="2.1"/><circle cx="930.9" cy="456.3" r="2.1"/><circle cx="934.4" cy="457.4" r="2.1"/><circle cx="937.8" cy="465.3" r="2.1"/></g><g fill="#7e62ec" stroke="#1e1e1e" stroke-width="0.45"><circle cx="-1.3" cy="457.8" r="2.1"/><circle cx="2.1" cy="457.2" r="2.1"/><circle cx="5.6" cy="456.7" r="2.1"/><circle cx="9.0" cy="457.4" r="2.1"/><circle cx="12.5" cy="459.4" r="2.1"/><circle cx="15.9" cy="457.6" r="2.1"/><circle cx="19.3" cy="462.7" r="2.1"/><circle cx="22.8" cy="456.9" r="2.1"/><circle cx="26.2" cy="460.1" r="2.1"/><circle cx="29.7" cy="456.2" r="2.1"/><circle cx="33.1" cy="456.8" r="2.1"/><circle cx="36.5" cy="450.4" r="2.1"/><circle cx="40.0" cy="453.8" r="2.1"/><circle cx="43.4" cy="453.6" r="2.1"/><circle cx="46.9" cy="452.7" r="2.1"/><circle cx="50.3" cy="446.7" r="2.1"/><circle cx="53.7" cy="455.4" r="2.1"/><circle cx="57.2" cy="451.6" r="2.1"/><circle cx="60.6" cy="451.3" r="2.1"/><circle cx="64.1" cy="451.7" r="2.1"/><circle cx="67.5" cy="451.6" r="2.1"/><circle cx="70.9" cy="453.4" r="2.1"/><circle cx="74.4" cy="448.3" r="2.1"/><circle cx="77.8" cy="449.2" r="2.1"/><circle cx="81.3" cy="452.6" r="2.1"/><circle cx="84.7" cy="452.0" r="2.1"/><circle cx="88.1" cy="450.4" r="2.1"/><circle cx="91.6" cy="449.7" r="2.1"/><circle cx="95.0" cy="448.7" r="2.1"/><circle cx="98.5" cy="450.9" r="2.1"/><circle cx="101.9" cy="454.0" r="2.1"/><circle cx="105.3" cy="446.7" r="2.1"/><circle cx="108.8" cy="453.6" r="2.1"/><circle cx="112.2" cy="450.8" r="2.1"/><circle cx="115.7" cy="446.2" r="2.1"/><circle cx="119.1" cy="449.1" r="2.1"/><circle cx="122.5" cy="441.7" r="2.1"/><circle cx="126.0" cy="440.1" r="2.1"/><circle cx="129.4" cy="440.7" r="2.1"/><circle cx="132.9" cy="442.5" r="2.1"/><circle cx="136.3" cy="442.0" r="2.1"/><circle cx="139.7" cy="440.7" r="2.1"/><circle cx="143.2" cy="441.8" r="2.1"/><circle cx="146.6" cy="434.3" r="2.1"/><circle cx="150.1" cy="441.5" r="2.1"/><circle cx="153.5" cy="435.2" r="2.1"/><circle cx="156.9" cy="437.0" r="2.1"/><circle cx="160.4" cy="437.3" r="2.1"/><circle cx="163.8" cy="434.6" r="2.1"/><circle cx="167.3" cy="433.5" r="2.1"/><circle cx="170.7" cy="434.1" r="2.1"/><circle cx="174.1" cy="436.6" r="2.1"/><circle cx="177.6" cy="438.0" r="2.1"/><circle cx="181.0" cy="437.4" r="2.1"/><circle cx="184.5" cy="432.2" r="2.1"/><circle cx="187.9" cy="431.9" r="2.1"/><circle cx="191.3" cy="430.2" r="2.1"/><circle cx="194.8" cy="433.1" r="2.1"/><circle cx="198.2" cy="424.2" r="2.1"/><circle cx="201.7" cy="432.9" r="2.1"/><circle cx="205.1" cy="426.3" r="2.1"/><circle cx="208.5" cy="424.1" r="2.1"/><circle cx="212.0" cy="426.3" r="2.1"/><circle cx="215.4" cy="427.3" r="2.1"/><circle cx="218.9" cy="423.9" r="2.1"/><circle cx="222.3" cy="424.9" r="2.1"/><circle cx="225.7" cy="420.8" r="2.1"/><circle cx="229.2" cy="423.0" r="2.1"/><circle cx="232.6" cy="421.8" r="2.1"/><circle cx="236.1" cy="416.4" r="2.1"/><circle cx="239.5" cy="420.0" r="2.1"/><circle cx="242.9" cy="414.8" r="2.1"/><circle cx="246.4" cy="413.3" r="2.1"/><circle cx="249.8" cy="408.8" r="2.1"/><circle cx="253.3" cy="408.2" r="2.1"/><circle cx="256.7" cy="407.0" r="2.1"/><circle cx="260.1" cy="395.4" r="2.1"/><circle cx="263.6" cy="397.0" r="2.1"/><circle cx="267.0" cy="391.3" r="2.1"/><circle cx="270.5" cy="386.6" r="2.1"/><circle cx="273.9" cy="374.7" r="2.1"/><circle cx="277.3" cy="378.3" r="2.1"/><circle cx="280.8" cy="377.4" r="2.1"/><circle cx="284.2" cy="369.2" r="2.1"/><circle cx="287.7" cy="368.7" r="2.1"/><circle cx="291.1" cy="356.7" r="2.1"/><circle cx="294.5" cy="363.8" r="2.1"/><circle cx="298.0" cy="355.2" r="2.1"/><circle cx="301.4" cy="356.0" r="2.1"/><circle cx="304.9" cy="341.6" r="2.1"/><circle cx="308.3" cy="345.9" r="2.1"/><circle cx="311.7" cy="338.2" r="2.1"/><circle cx="315.2" cy="338.1" r="2.1"/><circle cx="318.6" cy="327.9" r="2.1"/><circle cx="322.1" cy="325.2" r="2.1"/><circle cx="325.5" cy="331.8" r="2.1"/><circle cx="328.9" cy="316.4" r="2.1"/><circle cx="332.4" cy="312.7" r="2.1"/><circle cx="335.8" cy="309.8" r="2.1"/><circle cx="339.3" cy="300.6" r="2.1"/><circle cx="342.7" cy="302.2" r="2.1"/><circle cx="346.1" cy="297.5" r="2.1"/><circle cx="349.6" cy="283.4" r="2.1"/><circle cx="353.0" cy="280.2" r="2.1"/><circle cx="356.5" cy="293.2" r="2.1"/><circle cx="359.9" cy="294.5" r="2.1"/><circle cx="363.3" cy="295.1" r="2.1"/><circle cx="366.8" cy="298.0" r="2.1"/><circle cx="370.2" cy="291.9" r="2.1"/><circle cx="373.7" cy="298.8" r="2.1"/><circle cx="377.1" cy="300.9" r="2.1"/><circle cx="380.5" cy="307.7" r="2.1"/><circle cx="384.0" cy="323.1" r="2.1"/><circle cx="387.4" cy="322.5" r="2.1"/><circle cx="390.9" cy="338.7" r="2.1"/><circle cx="394.3" cy="336.0" r="2.1"/><circle cx="397.7" cy="338.0" r="2.1"/><circle cx="401.2" cy="346.1" r="2.1"/><circle cx="404.6" cy="352.3" r="2.1"/><circle cx="408.1" cy="350.2" r="2.1"/><circle cx="411.5" cy="346.8" r="2.1"/><circle cx="414.9" cy="354.9" r="2.1"/><circle cx="418.4" cy="360.7" r="2.1"/><circle cx="421.8" cy="356.5" r="2.1"/><circle cx="425.3" cy="357.8" r="2.1"/><circle cx="428.7" cy="366.3" r="2.1"/><circle cx="432.1" cy="365.6" r="2.1"/><circle cx="435.6" cy="363.6" r="2.1"/><circle cx="439.0" cy="368.4" r="2.1"/><circle cx="442.5" cy="368.7" r="2.1"/><circle cx="445.9" cy="373.1" r="2.1"/><circle cx="449.3" cy="373.3" r="2.1"/><circle cx="452.8" cy="377.6" r="2.1"/><circle cx="456.2" cy="376.9" r="2.1"/><circle cx="459.7" cy="370.0" r="2.1"/><circle cx="463.1" cy="377.5" r="2.1"/><circle cx="466.5" cy="379.9" r="2.1"/><circle cx="470.0" cy="379.3" r="2.1"/><circle cx="473.4" cy="382.1" r="2.1"/><circle cx="476.9" cy="377.7" r="2.1"/><circle cx="480.3" cy="377.3" r="2.1"/><circle cx="483.7" cy="384.5" r="2.1"/><circle cx="487.2" cy="378.7" r="2.1"/><circle cx="490.6" cy="375.9" r="2.1"/><circle cx="494.1" cy="387.5" r="2.1"/><circle cx="497.5" cy="382.7" r="2.1"/><circle cx="500.9" cy="385.2" r="2.1"/><circle cx="504.4" cy="382.7" r="2.1"/><circle cx="507.8" cy="384.0" r="2.1"/><circle cx="511.3" cy="385.7" r="2.1"/><circle cx="514.7" cy="389.3" r="2.1"/><circle cx="518.1" cy="391.7" r="2.1"/><circle cx="521.6" cy="382.2" r="2.1"/><circle cx="525.0" cy="391.5" r="2.1"/><circle cx="528.5" cy="384.3" r="2.1"/><circle cx="531.9" cy="383.9" r="2.1"/><circle cx="535.3" cy="388.8" r="2.1"/><circle cx="538.8" cy="385.3" r="2.1"/><circle cx="542.2" cy="379.4" r="2.1"/><circle cx="545.7" cy="389.6" r="2.1"/><circle cx="549.1" cy="379.5" r="2.1"/><circle cx="552.5" cy="382.2" r="2.1"/><circle cx="556.0" cy="381.0" r="2.1"/><circle cx="559.4" cy="384.3" r="2.1"/><circle cx="562.9" cy="377.5" r="2.1"/><circle cx="566.3" cy="381.8" r="2.1"/><circle cx="569.7" cy="375.3" r="2.1"/><circle cx="573.2" cy="381.0" r="2.1"/><circle cx="576.6" cy="374.0" r="2.1"/><circle cx="580.1" cy="374.8" r="2.1"/><circle cx="583.5" cy="381.8" r="2.1"/><circle cx="586.9" cy="374.4" r="2.1"/><circle cx="590.4" cy="369.1" r="2.1"/><circle cx="593.8" cy="371.6" r="2.1"/><circle cx="597.3" cy="360.2" r="2.1"/><circle cx="600.7" cy="352.1" r="2.1"/><circle cx="604.1" cy="355.7" r="2.1"/><circle cx="607.6" cy="347.4" r="2.1"/><circle cx="611.0" cy="352.6" r="2.1"/><circle cx="614.5" cy="344.4" r="2.1"/><circle cx="617.9" cy="325.8" r="2.1"/><circle cx="621.3" cy="303.7" r="2.1"/><circle cx="624.8" cy="285.5" r="2.1"/><circle cx="628.2" cy="266.4" r="2.1"/><circle cx="631.7" cy="242.4" r="2.1"/><circle cx="635.1" cy="227.7" r="2.1"/><circle cx="638.5" cy="201.8" r="2.1"/><circle cx="642.0" cy="209.8" r="2.1"/><circle cx="645.4" cy="216.4" r="2.1"/><circle cx="648.9" cy="241.1" r="2.1"/><circle cx="652.3" cy="259.9" r="2.1"/><circle cx="655.7" cy="258.8" r="2.1"/><circle cx="659.2" cy="284.5" r="2.1"/><circle cx="662.6" cy="289.0" r="2.1"/><circle cx="666.1" cy="292.3" r="2.1"/><circle cx="669.5" cy="296.0" r="2.1"/><circle cx="672.9" cy="304.4" r="2.1"/><circle cx="676.4" cy="317.4" r="2.1"/><circle cx="679.8" cy="317.1" r="2.1"/><circle cx="683.3" cy="324.5" r="2.1"/><circle cx="686.7" cy="331.9" r="2.1"/><circle cx="690.1" cy="337.0" r="2.1"/><circle cx="693.6" cy="346.7" r="2.1"/><circle cx="697.0" cy="352.5" r="2.1"/><circle cx="700.5" cy="362.4" r="2.1"/><circle cx="703.9" cy="379.2" r="2.1"/><circle cx="707.3" cy="389.3" r="2.1"/><circle cx="710.8" cy="396.9" r="2.1"/><circle cx="714.2" cy="398.1" r="2.1"/><circle cx="717.7" cy="412.6" r="2.1"/><circle cx="721.1" cy="422.9" r="2.1"/><circle cx="724.5" cy="429.2" r="2.1"/><circle cx="728.0" cy="432.8" r="2.1"/><circle cx="731.4" cy="436.5" r="2.1"/><circle cx="734.9" cy="439.6" r="2.1"/><circle cx="738.3" cy="443.0" r="2.1"/><circle cx="741.7" cy="448.5" r="2.1"/><circle cx="745.2" cy="445.6" r="2.1"/><circle cx="748.6" cy="452.5" r="2.1"/><circle cx="752.1" cy="447.2" r="2.1"/><circle cx="755.5" cy="450.6" r="2.1"/><circle cx="758.9" cy="447.7" r="2.1"/><circle cx="762.4" cy="447.6" r="2.1"/><circle cx="765.8" cy="454.7" r="2.1"/><circle cx="769.3" cy="448.2" r="2.1"/><circle cx="772.7" cy="445.8" r="2.1"/><circle cx="776.1" cy="447.9" r="2.1"/><circle cx="779.6" cy="449.5" r="2.1"/><circle cx="783.0" cy="457.2" r="2.1"/><circle cx="786.5" cy="451.9" r="2.1"/><circle cx="789.9" cy="454.5" r="2.1"/><circle cx="793.3" cy="449.2" r="2.1"/><circle cx="796.8" cy="453.6" r="2.1"/><circle cx="800.2" cy="454.9" r="2.1"/><circle cx="803.7" cy="458.3" r="2.1"/><circle cx="807.1" cy="451.1" r="2.1"/><circle cx="810.5" cy="455.0" r="2.1"/><circle cx="814.0" cy="454.2" r="2.1"/><circle cx="817.4" cy="450.4" r="2.1"/><circle cx="820.9" cy="453.4" r="2.1"/><circle cx="824.3" cy="452.7" r="2.1"/><circle cx="827.7" cy="446.8" r="2.1"/><circle cx="831.2" cy="455.4" r="2.1"/><circle cx="834.6" cy="455.3" r="2.1"/><circle cx="838.1" cy="452.5" r="2.1"/><circle cx="841.5" cy="449.9" r="2.1"/><circle cx="844.9" cy="458.2" r="2.1"/><circle cx="848.4" cy="454.7" r="2.1"/><circle cx="851.8" cy="457.0" r="2.1"/><circle cx="855.3" cy="458.2" r="2.1"/><circle cx="858.7" cy="452.7" r="2.1"/><circle cx="862.1" cy="456.6" r="2.1"/><circle cx="865.6" cy="453.6" r="2.1"/><circle cx="869.0" cy="454.2" r="2.1"/><circle cx="872.5" cy="454.2" r="2.1"/><circle cx="875.9" cy="454.5" r="2.1"/><circle cx="879.3" cy="457.8" r="2.1"/><circle cx="882.8" cy="455.0" r="2.1"/><circle cx="886.2" cy="454.3" r="2.1"/><circle cx="889.7" cy="454.0" r="2.1"/><circle cx="893.1" cy="455.9" r="2.1"/><circle cx="896.5" cy="452.3" r="2.1"/><circle cx="900.0" cy="453.6" r="2.1"/><circle cx="903.4" cy="455.0" r="2.1"/><circle cx="906.9" cy="453.7" r="2.1"/><circle cx="910.3" cy="455.2" r="2.1"/><circle cx="913.7" cy="454.0" r="2.1"/><circle cx="917.2" cy="461.8" r="2.1"/><circle cx="920.6" cy="460.0" r="2.1"/><circle cx="924.1" cy="457.6" r="2.1"/><circle cx="927.5" cy="456.4" r="2.1"/><circle cx="930.9" cy="463.1" r="2.1"/><circle cx="934.4" cy="457.8" r="2.1"/><circle cx="937.8" cy="456.7" r="2.1"/></g><g fill="#74a6f2" stroke="#1e1e1e" stroke-width="0.45"><circle cx="-1.3" cy="486.8" r="2.1"/><circle cx="2.1" cy="486.7" r="2.1"/><circle cx="9.0" cy="485.4" r="2.1"/><circle cx="15.9" cy="482.6" r="2.1"/><circle cx="19.3" cy="486.8" r="2.1"/><circle cx="22.8" cy="481.8" r="2.1"/><circle cx="29.7" cy="483.3" r="2.1"/><circle cx="33.1" cy="483.9" r="2.1"/><circle cx="36.5" cy="486.4" r="2.1"/><circle cx="40.0" cy="487.1" r="2.1"/><circle cx="43.4" cy="480.3" r="2.1"/><circle cx="46.9" cy="482.2" r="2.1"/><circle cx="50.3" cy="479.0" r="2.1"/><circle cx="53.7" cy="482.6" r="2.1"/><circle cx="57.2" cy="481.3" r="2.1"/><circle cx="60.6" cy="479.9" r="2.1"/><circle cx="64.1" cy="478.3" r="2.1"/><circle cx="67.5" cy="478.4" r="2.1"/><circle cx="70.9" cy="476.7" r="2.1"/><circle cx="74.4" cy="479.6" r="2.1"/><circle cx="77.8" cy="481.7" r="2.1"/><circle cx="81.3" cy="471.6" r="2.1"/><circle cx="84.7" cy="476.7" r="2.1"/><circle cx="88.1" cy="475.8" r="2.1"/><circle cx="91.6" cy="478.4" r="2.1"/><circle cx="95.0" cy="474.3" r="2.1"/><circle cx="98.5" cy="476.6" r="2.1"/><circle cx="101.9" cy="473.7" r="2.1"/><circle cx="105.3" cy="477.9" r="2.1"/><circle cx="108.8" cy="475.5" r="2.1"/><circle cx="112.2" cy="474.1" r="2.1"/><circle cx="115.7" cy="474.9" r="2.1"/><circle cx="119.1" cy="472.5" r="2.1"/><circle cx="122.5" cy="468.1" r="2.1"/><circle cx="126.0" cy="473.5" r="2.1"/><circle cx="129.4" cy="472.0" r="2.1"/><circle cx="132.9" cy="470.3" r="2.1"/><circle cx="136.3" cy="473.1" r="2.1"/><circle cx="139.7" cy="473.5" r="2.1"/><circle cx="143.2" cy="466.6" r="2.1"/><circle cx="146.6" cy="467.1" r="2.1"/><circle cx="150.1" cy="473.4" r="2.1"/><circle cx="153.5" cy="472.7" r="2.1"/><circle cx="156.9" cy="466.2" r="2.1"/><circle cx="160.4" cy="464.5" r="2.1"/><circle cx="163.8" cy="465.2" r="2.1"/><circle cx="167.3" cy="464.6" r="2.1"/><circle cx="170.7" cy="460.6" r="2.1"/><circle cx="174.1" cy="464.3" r="2.1"/><circle cx="177.6" cy="459.4" r="2.1"/><circle cx="181.0" cy="458.4" r="2.1"/><circle cx="184.5" cy="463.3" r="2.1"/><circle cx="187.9" cy="457.5" r="2.1"/><circle cx="191.3" cy="458.1" r="2.1"/><circle cx="194.8" cy="458.9" r="2.1"/><circle cx="198.2" cy="458.4" r="2.1"/><circle cx="201.7" cy="454.6" r="2.1"/><circle cx="205.1" cy="455.2" r="2.1"/><circle cx="208.5" cy="452.3" r="2.1"/><circle cx="212.0" cy="459.4" r="2.1"/><circle cx="215.4" cy="455.7" r="2.1"/><circle cx="218.9" cy="450.2" r="2.1"/><circle cx="222.3" cy="453.0" r="2.1"/><circle cx="225.7" cy="454.6" r="2.1"/><circle cx="229.2" cy="453.5" r="2.1"/><circle cx="232.6" cy="457.0" r="2.1"/><circle cx="236.1" cy="455.3" r="2.1"/><circle cx="239.5" cy="449.2" r="2.1"/><circle cx="242.9" cy="450.1" r="2.1"/><circle cx="246.4" cy="445.7" r="2.1"/><circle cx="249.8" cy="447.9" r="2.1"/><circle cx="253.3" cy="445.0" r="2.1"/><circle cx="256.7" cy="450.1" r="2.1"/><circle cx="260.1" cy="439.7" r="2.1"/><circle cx="263.6" cy="430.5" r="2.1"/><circle cx="267.0" cy="432.2" r="2.1"/><circle cx="270.5" cy="432.2" r="2.1"/><circle cx="273.9" cy="426.2" r="2.1"/><circle cx="277.3" cy="425.7" r="2.1"/><circle cx="280.8" cy="425.5" r="2.1"/><circle cx="284.2" cy="425.9" r="2.1"/><circle cx="287.7" cy="421.9" r="2.1"/><circle cx="291.1" cy="413.5" r="2.1"/><circle cx="294.5" cy="411.3" r="2.1"/><circle cx="298.0" cy="399.6" r="2.1"/><circle cx="301.4" cy="392.3" r="2.1"/><circle cx="304.9" cy="381.9" r="2.1"/><circle cx="308.3" cy="376.4" r="2.1"/><circle cx="311.7" cy="373.3" r="2.1"/><circle cx="315.2" cy="355.0" r="2.1"/><circle cx="318.6" cy="349.1" r="2.1"/><circle cx="322.1" cy="340.7" r="2.1"/><circle cx="325.5" cy="325.8" r="2.1"/><circle cx="328.9" cy="321.3" r="2.1"/><circle cx="332.4" cy="313.0" r="2.1"/><circle cx="335.8" cy="318.4" r="2.1"/><circle cx="339.3" cy="310.9" r="2.1"/><circle cx="342.7" cy="300.2" r="2.1"/><circle cx="346.1" cy="289.5" r="2.1"/><circle cx="349.6" cy="296.6" r="2.1"/><circle cx="353.0" cy="309.3" r="2.1"/><circle cx="356.5" cy="317.0" r="2.1"/><circle cx="359.9" cy="316.6" r="2.1"/><circle cx="363.3" cy="325.1" r="2.1"/><circle cx="366.8" cy="323.2" r="2.1"/><circle cx="370.2" cy="329.8" r="2.1"/><circle cx="373.7" cy="336.1" r="2.1"/><circle cx="377.1" cy="343.8" r="2.1"/><circle cx="380.5" cy="343.1" r="2.1"/><circle cx="384.0" cy="359.7" r="2.1"/><circle cx="387.4" cy="371.4" r="2.1"/><circle cx="390.9" cy="371.9" r="2.1"/><circle cx="394.3" cy="376.8" r="2.1"/><circle cx="397.7" cy="387.5" r="2.1"/><circle cx="401.2" cy="389.2" r="2.1"/><circle cx="404.6" cy="388.3" r="2.1"/><circle cx="408.1" cy="401.2" r="2.1"/><circle cx="411.5" cy="400.8" r="2.1"/><circle cx="414.9" cy="400.4" r="2.1"/><circle cx="418.4" cy="410.5" r="2.1"/><circle cx="421.8" cy="405.8" r="2.1"/><circle cx="425.3" cy="404.2" r="2.1"/><circle cx="428.7" cy="407.8" r="2.1"/><circle cx="432.1" cy="405.0" r="2.1"/><circle cx="435.6" cy="406.8" r="2.1"/><circle cx="439.0" cy="411.4" r="2.1"/><circle cx="442.5" cy="409.3" r="2.1"/><circle cx="445.9" cy="410.5" r="2.1"/><circle cx="449.3" cy="418.1" r="2.1"/><circle cx="452.8" cy="416.4" r="2.1"/><circle cx="456.2" cy="417.0" r="2.1"/><circle cx="459.7" cy="416.9" r="2.1"/><circle cx="463.1" cy="417.5" r="2.1"/><circle cx="466.5" cy="421.4" r="2.1"/><circle cx="470.0" cy="417.5" r="2.1"/><circle cx="473.4" cy="424.2" r="2.1"/><circle cx="476.9" cy="416.3" r="2.1"/><circle cx="480.3" cy="419.4" r="2.1"/><circle cx="483.7" cy="416.8" r="2.1"/><circle cx="487.2" cy="420.9" r="2.1"/><circle cx="490.6" cy="424.5" r="2.1"/><circle cx="494.1" cy="428.4" r="2.1"/><circle cx="497.5" cy="422.7" r="2.1"/><circle cx="500.9" cy="425.7" r="2.1"/><circle cx="504.4" cy="425.0" r="2.1"/><circle cx="507.8" cy="424.0" r="2.1"/><circle cx="511.3" cy="422.8" r="2.1"/><circle cx="514.7" cy="426.8" r="2.1"/><circle cx="518.1" cy="421.4" r="2.1"/><circle cx="521.6" cy="427.2" r="2.1"/><circle cx="525.0" cy="426.1" r="2.1"/><circle cx="528.5" cy="422.5" r="2.1"/><circle cx="531.9" cy="419.9" r="2.1"/><circle cx="535.3" cy="417.1" r="2.1"/><circle cx="538.8" cy="425.7" r="2.1"/><circle cx="542.2" cy="414.2" r="2.1"/><circle cx="545.7" cy="422.1" r="2.1"/><circle cx="549.1" cy="418.1" r="2.1"/><circle cx="552.5" cy="414.0" r="2.1"/><circle cx="556.0" cy="410.5" r="2.1"/><circle cx="559.4" cy="416.4" r="2.1"/><circle cx="562.9" cy="417.6" r="2.1"/><circle cx="566.3" cy="408.2" r="2.1"/><circle cx="569.7" cy="409.4" r="2.1"/><circle cx="573.2" cy="412.8" r="2.1"/><circle cx="576.6" cy="409.7" r="2.1"/><circle cx="580.1" cy="414.1" r="2.1"/><circle cx="583.5" cy="404.2" r="2.1"/><circle cx="586.9" cy="404.1" r="2.1"/><circle cx="590.4" cy="394.2" r="2.1"/><circle cx="593.8" cy="401.1" r="2.1"/><circle cx="597.3" cy="387.8" r="2.1"/><circle cx="600.7" cy="379.1" r="2.1"/><circle cx="604.1" cy="382.7" r="2.1"/><circle cx="607.6" cy="379.5" r="2.1"/><circle cx="611.0" cy="383.2" r="2.1"/><circle cx="614.5" cy="369.9" r="2.1"/><circle cx="617.9" cy="358.9" r="2.1"/><circle cx="621.3" cy="346.0" r="2.1"/><circle cx="624.8" cy="329.7" r="2.1"/><circle cx="628.2" cy="305.8" r="2.1"/><circle cx="631.7" cy="297.2" r="2.1"/><circle cx="635.1" cy="282.8" r="2.1"/><circle cx="638.5" cy="267.6" r="2.1"/><circle cx="642.0" cy="263.9" r="2.1"/><circle cx="645.4" cy="265.6" r="2.1"/><circle cx="648.9" cy="267.5" r="2.1"/><circle cx="652.3" cy="284.8" r="2.1"/><circle cx="655.7" cy="290.2" r="2.1"/><circle cx="659.2" cy="315.3" r="2.1"/><circle cx="662.6" cy="325.8" r="2.1"/><circle cx="666.1" cy="328.2" r="2.1"/><circle cx="669.5" cy="330.4" r="2.1"/><circle cx="672.9" cy="339.0" r="2.1"/><circle cx="676.4" cy="347.1" r="2.1"/><circle cx="679.8" cy="352.2" r="2.1"/><circle cx="683.3" cy="357.3" r="2.1"/><circle cx="686.7" cy="370.1" r="2.1"/><circle cx="690.1" cy="375.6" r="2.1"/><circle cx="693.6" cy="389.3" r="2.1"/><circle cx="697.0" cy="395.3" r="2.1"/><circle cx="700.5" cy="415.1" r="2.1"/><circle cx="703.9" cy="423.7" r="2.1"/><circle cx="707.3" cy="431.7" r="2.1"/><circle cx="710.8" cy="446.3" r="2.1"/><circle cx="714.2" cy="453.9" r="2.1"/><circle cx="717.7" cy="450.5" r="2.1"/><circle cx="721.1" cy="463.5" r="2.1"/><circle cx="724.5" cy="461.6" r="2.1"/><circle cx="728.0" cy="470.8" r="2.1"/><circle cx="731.4" cy="476.9" r="2.1"/><circle cx="734.9" cy="470.5" r="2.1"/><circle cx="738.3" cy="474.2" r="2.1"/><circle cx="741.7" cy="474.7" r="2.1"/><circle cx="745.2" cy="477.3" r="2.1"/><circle cx="748.6" cy="479.0" r="2.1"/><circle cx="752.1" cy="481.6" r="2.1"/><circle cx="755.5" cy="476.1" r="2.1"/><circle cx="758.9" cy="484.1" r="2.1"/><circle cx="762.4" cy="477.7" r="2.1"/><circle cx="765.8" cy="481.5" r="2.1"/><circle cx="769.3" cy="484.4" r="2.1"/><circle cx="772.7" cy="483.6" r="2.1"/><circle cx="776.1" cy="479.4" r="2.1"/><circle cx="779.6" cy="480.5" r="2.1"/><circle cx="783.0" cy="481.6" r="2.1"/><circle cx="786.5" cy="483.2" r="2.1"/><circle cx="789.9" cy="486.9" r="2.1"/><circle cx="793.3" cy="480.6" r="2.1"/><circle cx="796.8" cy="485.9" r="2.1"/><circle cx="800.2" cy="486.7" r="2.1"/><circle cx="803.7" cy="486.6" r="2.1"/><circle cx="807.1" cy="486.4" r="2.1"/><circle cx="814.0" cy="486.5" r="2.1"/><circle cx="817.4" cy="487.6" r="2.1"/><circle cx="820.9" cy="486.8" r="2.1"/><circle cx="827.7" cy="480.0" r="2.1"/><circle cx="831.2" cy="488.9" r="2.1"/><circle cx="834.6" cy="484.6" r="2.1"/><circle cx="838.1" cy="484.6" r="2.1"/><circle cx="841.5" cy="482.7" r="2.1"/><circle cx="844.9" cy="480.2" r="2.1"/><circle cx="848.4" cy="484.4" r="2.1"/><circle cx="851.8" cy="483.6" r="2.1"/><circle cx="855.3" cy="486.9" r="2.1"/><circle cx="858.7" cy="481.5" r="2.1"/><circle cx="865.6" cy="486.4" r="2.1"/><circle cx="869.0" cy="485.0" r="2.1"/><circle cx="872.5" cy="483.7" r="2.1"/><circle cx="875.9" cy="483.6" r="2.1"/><circle cx="879.3" cy="482.6" r="2.1"/><circle cx="882.8" cy="484.3" r="2.1"/><circle cx="886.2" cy="485.9" r="2.1"/><circle cx="889.7" cy="485.4" r="2.1"/><circle cx="893.1" cy="482.0" r="2.1"/><circle cx="896.5" cy="485.2" r="2.1"/><circle cx="900.0" cy="483.5" r="2.1"/><circle cx="903.4" cy="486.4" r="2.1"/><circle cx="910.3" cy="487.8" r="2.1"/><circle cx="913.7" cy="485.1" r="2.1"/><circle cx="917.2" cy="481.5" r="2.1"/><circle cx="920.6" cy="482.0" r="2.1"/><circle cx="924.1" cy="481.3" r="2.1"/><circle cx="927.5" cy="488.0" r="2.1"/><circle cx="930.9" cy="483.9" r="2.1"/><circle cx="934.4" cy="486.2" r="2.1"/><circle cx="937.8" cy="484.3" r="2.1"/></g><rect x="0" y="474" width="936" height="1" fill="#e41c1c"/><rect x="34.0" y="471" width="1" height="3" fill="#e0e0e0"/><rect x="159.5" y="471" width="1" height="3" fill="#e0e0e0"/><text x="160.0" y="483" fill="#e8e8e8" font-size="9.6" text-anchor="middle" font-family="Liberation Sans">1200</text><rect x="285.0" y="471" width="1" height="3" fill="#e0e0e0"/><rect x="410.5" y="471" width="1" height="3" fill="#e0e0e0"/><text x="411.0" y="483" fill="#e8e8e8" font-size="9.6" text-anchor="middle" font-family="Liberation Sans">1400</text><rect x="536.0" y="471" width="1" height="3" fill="#e0e0e0"/><rect x="661.5" y="471" width="1" height="3" fill="#e0e0e0"/><text x="662.0" y="483" fill="#e8e8e8" font-size="9.6" text-anchor="middle" font-family="Liberation Sans">1600</text><rect x="787.0" y="471" width="1" height="3" fill="#e0e0e0"/><rect x="912.5" y="471" width="1" height="3" fill="#e0e0e0"/><text x="913.0" y="483" fill="#e8e8e8" font-size="9.6" text-anchor="middle" font-family="Liberation Sans">1800</text><rect x="0" y="400.7" width="4" height="1.3" fill="#e0e0e0"/><text x="4" y="404.2" fill="#ececec" font-size="9.6" font-family="Liberation Sans">100</text><rect x="0" y="326.2" width="4" height="1.3" fill="#e0e0e0"/><text x="4" y="329.7" fill="#ececec" font-size="9.6" font-family="Liberation Sans">200</text><rect x="0" y="251.7" width="4" height="1.3" fill="#e0e0e0"/><text x="4" y="255.2" fill="#ececec" font-size="9.6" font-family="Liberation Sans">300</text><rect x="0" y="177.2" width="4" height="1.3" fill="#e0e0e0"/><text x="4" y="180.7" fill="#ececec" font-size="9.6" font-family="Liberation Sans">400</text><rect x="0" y="102.7" width="4" height="1.3" fill="#e0e0e0"/><text x="4" y="106.2" fill="#ececec" font-size="9.6" font-family="Liberation Sans">500</text></svg></div>
<div class="a" style="left:0;top:486px;width:936px;height:7px;background:#fbfbfb"><div class="a" style="left:0;top:3px;width:936px;height:1px;background:#cdcdcd"></div></div>
<svg width="936" height="93" viewBox="0 493 936 93" style="position:absolute;left:0;top:493px"><rect x="0" y="493" width="936" height="93" fill="#232323"/><rect x="0" y="539" width="936" height="2" fill="#cccccc"/><polyline points="0.0,542.7 3.4,543.4 6.9,542.1 10.3,542.2 13.8,541.8 17.2,542.7 20.6,541.5 24.1,541.3 27.5,541.0 31.0,540.9 34.4,542.0 37.8,543.1 41.3,540.9 44.7,542.0 48.2,541.5 51.6,540.7 55.0,541.1 58.5,541.1 61.9,540.8 65.4,542.3 68.8,539.9 72.2,541.3 75.7,541.2 79.1,540.6 82.6,540.9 86.0,541.3 89.4,540.8 92.9,540.9 96.3,541.0 99.8,539.3 103.2,541.3 106.6,541.7 110.1,540.9 113.5,540.8 117.0,539.3 120.4,540.0 123.8,539.5 127.3,539.6 130.7,540.5 134.2,539.3 137.6,539.7 141.0,538.5 144.5,539.5 147.9,539.6 151.4,539.0 154.8,538.9 158.2,540.4 161.7,538.4 165.1,538.4 168.6,538.5 172.0,539.6 175.4,540.0 178.9,538.8 182.3,538.1 185.8,538.2 189.2,539.0 192.6,537.7 196.1,539.0 199.5,538.9 203.0,537.9 206.4,538.1 209.8,538.0 213.3,538.3 216.7,536.5 220.2,537.7 223.6,536.6 227.0,536.2 230.5,536.5 233.9,536.2 237.4,535.5 240.8,534.9 244.2,534.9 247.7,536.0 251.1,535.9 254.6,534.7 258.0,534.6 261.4,533.2 264.9,533.1 268.3,532.9 271.8,531.6 275.2,531.1 278.6,531.3 282.1,530.5 285.5,529.5 289.0,529.9 292.4,529.0 295.8,529.2 299.3,528.1 302.7,526.6 306.2,525.3 309.6,523.6 313.0,521.7 316.5,520.3 319.9,519.3 323.4,516.4 326.8,513.7 330.2,509.1 333.7,508.4 337.1,507.1 340.6,506.2 344.0,504.6 347.4,504.3 350.9,505.3 354.3,505.1 357.8,505.3 361.2,508.0 364.6,509.1 368.1,509.4 371.5,511.4 375.0,511.7 378.4,514.1 381.8,515.1 385.3,517.0 388.7,519.6 392.2,521.6 395.6,524.0 399.0,524.3 402.5,524.3 405.9,524.1 409.4,522.4 412.8,524.8 416.2,523.7 419.7,525.2 423.1,526.1 426.6,526.1 430.0,526.3 433.4,526.9 436.9,527.5 440.3,527.6 443.8,527.6 447.2,527.4 450.6,528.7 454.1,528.0 457.5,528.6 461.0,527.8 464.4,528.0 467.8,527.9 471.3,528.4 474.7,528.8 478.2,528.7 481.6,528.4 485.0,528.5 488.5,530.2 491.9,529.3 495.4,529.5 498.8,530.8 502.2,530.7 505.7,530.3 509.1,529.8 512.6,531.4 516.0,530.2 519.4,530.3 522.9,529.9 526.3,529.2 529.8,529.2 533.2,530.0 536.6,529.7 540.1,529.1 543.5,528.3 547.0,527.9 550.4,528.3 553.8,527.3 557.3,528.5 560.7,528.4 564.2,529.1 567.6,527.7 571.0,526.5 574.5,525.9 577.9,523.9 581.4,525.1 584.8,524.9 588.2,525.1 591.7,524.5 595.1,524.0 598.6,523.3 602.0,522.3 605.4,520.9 608.9,517.5 612.3,515.9 615.8,513.5 619.2,513.4 622.6,510.9 626.1,508.0 629.5,504.4 633.0,502.7 636.4,500.0 639.8,497.9 643.3,497.7 646.7,498.5 650.2,498.6 653.6,502.0 657.0,504.5 660.5,507.1 663.9,510.0 667.4,511.3 670.8,512.9 674.2,513.1 677.7,514.3 681.1,514.8 684.6,515.1 688.0,518.5 691.4,519.7 694.9,523.0 698.3,525.1 701.8,526.1 705.2,528.6 708.6,530.9 712.1,532.8 715.5,534.6 719.0,537.8 722.4,538.2 725.8,539.1 729.3,539.1 732.7,540.1 736.2,540.0 739.6,540.9 743.0,541.4 746.5,541.2 749.9,541.0 753.4,540.7 756.8,541.6 760.2,541.8 763.7,541.6 767.1,541.4 770.6,542.2 774.0,543.5 777.4,541.9 780.9,542.4 784.3,542.6 787.8,540.9 791.2,542.6 794.6,542.2 798.1,543.6 801.5,542.7 805.0,542.4 808.4,542.7 811.8,543.0 815.3,542.6 818.7,542.9 822.2,542.1 825.6,542.8 829.0,543.5 832.5,544.2 835.9,543.5 839.4,543.2 842.8,543.8 846.2,543.7 849.7,544.1 853.1,543.8 856.6,543.1 860.0,543.4 863.4,543.4 866.9,543.4 870.3,543.4 873.8,542.8 877.2,542.1 880.6,543.0 884.1,542.2 887.5,543.5 891.0,543.4 894.4,542.5 897.8,543.9 901.3,544.0 904.7,543.6 908.2,544.5 911.6,544.6 915.0,542.8 918.5,544.1 921.9,543.8 925.4,543.8 928.8,544.1 932.2,543.1 935.7,543.1" fill="none" stroke="#1d6e1d" stroke-width="1.15"/><rect x="0" y="509.5" width="3.5" height="1" fill="#e0e0e0"/><text x="3.5" y="513" fill="#e8e8e8" font-size="9.2" font-family="Liberation Sans">200</text><rect x="0" y="569" width="3.5" height="1" fill="#e0e0e0"/><rect x="4" y="569" width="3" height="1" fill="#e0e0e0"/><text x="7" y="572.5" fill="#e8e8e8" font-size="9.2" font-family="Liberation Sans">200</text><text x="934" y="506" fill="#e8e8e8" font-size="11" text-anchor="end" font-family="Liberation Sans">×0.2</text></svg>
<div class="a" style="left:0;top:586px;width:936px;height:7px;background:#fbfbfb"><div class="a" style="left:0;top:0;width:936px;height:1px;background:#a0a0a0"></div></div>
<div class="a" style="left:936px;top:85px;width:3px;height:597px;background:#f2f2f1"></div>
<div class="a" style="left:939px;top:85px;width:1px;height:597px;background:#c4c4c2"></div>
<!-- console -->
<div class="a" style="left:0;top:593px;width:926px;height:61px;background:#002a36"></div>
<div class="a" style="left:926px;top:593px;width:10px;height:61px;background:#cfcfcf"></div>
<div class="a" style="left:929px;top:619px;width:5px;height:32px;background:#8a8a8a;border-radius:3px"></div>
<div class="t" style="left:0;top:594px;color:#a5a51a">=-&gt; %bg7 = Spline(1350.3,42)</div>
<div class="t" style="left:0;top:609.5px;color:#93a1a1">%bg7 created.</div>
<div class="t" style="left:0;top:625px;color:#a5a51a">=-&gt; @7: Y = y - %bg7(x)</div>
<div class="a" style="left:1px;top:655px;width:920px;height:26.7px;background:#fff;border:1px solid #c0c0be;border-radius:3px"></div>
<div class="a" style="left:922px;top:655px;width:12px;height:26px;background:#f4f4f3;border:1px solid #cfcfcd;border-radius:2px"></div><svg class="a" style="left:923px;top:657px" width="10" height="22"><path d="M2 7 L8 7 L5 3.8 Z M2 15 L8 15 L5 18.2 Z" fill="#444"/><path d="M0 11 L10 11" stroke="#dcdcda" stroke-width="1"/></svg>
<!-- status bar -->
<div class="a" style="left:886px;top:684px;width:1px;height:16px;background:#bdbdbb"></div>
<div class="a" style="left:1092px;top:682px;width:143px;height:1px;background:#d6d6d4"></div>
<div class="btn" style="left:1069px;top:683px;width:21px;height:18px"></div>
<svg class="a" style="left:1073px;top:686px" width="14" height="12"><path d="M2 1 L2 10 M5 1 L5 10 M9 1 L9 10 M12 1 L12 10" stroke="#333" stroke-width="1"/><rect x="0.8" y="3" width="2.4" height="2.4" fill="#fff" stroke="#222" stroke-width="0.8"/><rect x="3.8" y="6" width="2.4" height="2.4" fill="#fff" stroke="#222" stroke-width="0.8"/><rect x="7.8" y="4" width="2.4" height="2.4" fill="#fff" stroke="#222" stroke-width="0.8"/><rect x="10.8" y="5" width="2.4" height="2.4" fill="#fff" stroke="#222" stroke-width="0.8"/></svg>
<div class="t" style="left:1109.3px;top:686.2px">add point</div>
<svg class="a" style="left:1157px;top:685px" width="13" height="14"><path d="M1 3 C3 0 6 0 7 3" stroke="#555" stroke-width="0.8" fill="none"/><rect x="2.5" y="3.5" width="9" height="10" rx="4" fill="#f4f4f4" stroke="#666" stroke-width="0.9"/><rect x="6.3" y="4.5" width="1.6" height="3.5" fill="#4a90d9"/></svg>
<div class="t" style="left:1171px;top:686.2px">del point</div>
<!-- tabs -->
<div class="a" style="left:980.5px;top:87.5px;width:60.5px;height:24px;background:linear-gradient(#ecebe9,#e2e2e0);border:1px solid #c4c4c1;border-bottom:none;border-radius:3px 3px 0 0"></div>
<div class="a" style="left:1040.5px;top:87.5px;width:58px;height:24px;background:linear-gradient(#ecebe9,#e2e2e0);border:1px solid #c4c4c1;border-bottom:none;border-radius:3px 3px 0 0"></div>
<div class="a" style="left:943px;top:111px;width:303.5px;height:422.5px;background:#e8e8e7;border:1px solid #c4c4c1"></div><div class="a" style="left:944px;top:112px;width:1px;height:420px;background:#fbfbfa"></div><div class="a" style="left:1244px;top:112px;width:1px;height:420px;background:#fbfbfa"></div><div class="a" style="left:944px;top:531.5px;width:301px;height:1px;background:#fbfbfa"></div><div class="a" style="left:944px;top:112px;width:301px;height:332px;background:#fbfbfa"></div>
<div class="a" style="left:944px;top:85.5px;width:37px;height:26.5px;background:#fafafa;border:1px solid #c4c4c1;border-bottom:none;border-radius:3px 3px 0 0"></div>
<div class="t" style="left:952.5px;top:94px">data</div>
<div class="t" style="left:987.7px;top:94.5px">functions</div>
<div class="t" style="left:1047.6px;top:94.5px">variables</div>
<!-- list -->
<div class="a" style="left:947.5px;top:114px;width:295.5px;height:248px;background:#ffffff;border:1px solid #d4d4d2"></div>
<div class="a" style="left:948.5px;top:133px;width:294px;height:1px;background:#e4e4e2"></div>
<div class="a" style="left:981px;top:115px;width:1px;height:18px;background:#e0e0de"></div>
<div class="a" style="left:1015px;top:115px;width:1px;height:18px;background:#e0e0de"></div>
<div class="a" style="left:1099.5px;top:115px;width:1px;height:18px;background:#e0e0de"></div>
<div class="t" style="left:953.6px;top:118px">No</div>
<div class="t" style="left:987px;top:118px">#F+#</div>
<div class="t" style="left:1020.6px;top:118px">Name</div>
<div class="a" style="left:980.5px;top:133.5px;width:1px;height:20.3px;background:#e8e8e6"></div><div class="a" style="left:1014.5px;top:133.5px;width:1px;height:20.3px;background:#e8e8e6"></div><div class="a" style="left:1100px;top:133.5px;width:1px;height:20.3px;background:#e8e8e6"></div><div class="a" style="left:948.5px;top:153.8px;width:294px;height:1px;background:#ececea"></div><div class="a" style="left:950px;top:138px;width:13px;height:12px;background:#12e612;border:2px solid #1a1a1a"></div><div class="t" style="left:966.6px;top:138.5px;color:#1e1e1e;font-size:11.6px">0</div><div class="t" style="left:983.6px;top:138.5px;color:#1e1e1e;font-size:11.6px">0+0</div><div class="t" style="left:1017.4px;top:138.8px;color:#1e1e1e;font-size:11.2px">rGO_111</div><div class="a" style="left:980.5px;top:153.8px;width:1px;height:20.3px;background:#e8e8e6"></div><div class="a" style="left:1014.5px;top:153.8px;width:1px;height:20.3px;background:#e8e8e6"></div><div class="a" style="left:1100px;top:153.8px;width:1px;height:20.3px;background:#e8e8e6"></div><div class="a" style="left:948.5px;top:174.1px;width:294px;height:1px;background:#ececea"></div><div class="a" style="left:950px;top:159px;width:13px;height:12px;background:#b6ee1e;border:2px solid #1a1a1a"></div><div class="t" style="left:966.6px;top:158.8px;color:#1e1e1e;font-size:11.6px">1</div><div class="t" style="left:983.6px;top:158.8px;color:#1e1e1e;font-size:11.6px">0+0</div><div class="t" style="left:1017.4px;top:159.1px;color:#1e1e1e;font-size:11.2px">rGO_112</div><div class="a" style="left:980.5px;top:174.1px;width:1px;height:20.3px;background:#e8e8e6"></div><div class="a" style="left:1014.5px;top:174.1px;width:1px;height:20.3px;background:#e8e8e6"></div><div class="a" style="left:1100px;top:174.1px;width:1px;height:20.3px;background:#e8e8e6"></div><div class="a" style="left:948.5px;top:194.4px;width:294px;height:1px;background:#ececea"></div><div class="a" style="left:950px;top:179px;width:13px;height:12px;background:#fcc020;border:2px solid #1a1a1a"></div><div class="t" style="left:966.6px;top:179.1px;color:#1e1e1e;font-size:11.6px">2</div><div class="t" style="left:983.6px;top:179.1px;color:#1e1e1e;font-size:11.6px">0+0</div><div class="t" style="left:1017.4px;top:179.4px;color:#1e1e1e;font-size:11.2px">rGO_113</div><div class="a" style="left:980.5px;top:194.4px;width:1px;height:20.3px;background:#e8e8e6"></div><div class="a" style="left:1014.5px;top:194.4px;width:1px;height:20.3px;background:#e8e8e6"></div><div class="a" style="left:1100px;top:194.4px;width:1px;height:20.3px;background:#e8e8e6"></div><div class="a" style="left:948.5px;top:214.7px;width:294px;height:1px;background:#ececea"></div><div class="a" style="left:950px;top:199px;width:13px;height:12px;background:#f44a22;border:2px solid #1a1a1a"></div><div class="t" style="left:966.6px;top:199.4px;color:#1e1e1e;font-size:11.6px">3</div><div class="t" style="left:983.6px;top:199.4px;color:#1e1e1e;font-size:11.6px">0+0</div><div class="t" style="left:1017.4px;top:199.7px;color:#1e1e1e;font-size:11.2px">rGO_114</div><div class="a" style="left:980.5px;top:214.7px;width:1px;height:20.3px;background:#e8e8e6"></div><div class="a" style="left:1014.5px;top:214.7px;width:1px;height:20.3px;background:#e8e8e6"></div><div class="a" style="left:1100px;top:214.7px;width:1px;height:20.3px;background:#e8e8e6"></div><div class="a" style="left:948.5px;top:235.0px;width:294px;height:1px;background:#ececea"></div><div class="a" style="left:950px;top:220px;width:13px;height:12px;background:#f0469a;border:2px solid #1a1a1a"></div><div class="t" style="left:966.6px;top:219.7px;color:#1e1e1e;font-size:11.6px">4</div><div class="t" style="left:983.6px;top:219.7px;color:#1e1e1e;font-size:11.6px">0+0</div><div class="t" style="left:1017.4px;top:220.0px;color:#1e1e1e;font-size:11.2px">rGO_115</div><div class="a" style="left:980.5px;top:235.0px;width:1px;height:20.3px;background:#e8e8e6"></div><div class="a" style="left:1014.5px;top:235.0px;width:1px;height:20.3px;background:#e8e8e6"></div><div class="a" style="left:1100px;top:235.0px;width:1px;height:20.3px;background:#e8e8e6"></div><div class="a" style="left:948.5px;top:255.3px;width:294px;height:1px;background:#ececea"></div><div class="a" style="left:950px;top:240px;width:13px;height:12px;background:#de5cf0;border:2px solid #1a1a1a"></div><div class="t" style="left:966.6px;top:240.0px;color:#1e1e1e;font-size:11.6px">5</div><div class="t" style="left:983.6px;top:240.0px;color:#1e1e1e;font-size:11.6px">0+0</div><div class="t" style="left:1017.4px;top:240.3px;color:#1e1e1e;font-size:11.2px">rGO_116</div><div class="a" style="left:980.5px;top:255.3px;width:1px;height:20.3px;background:#e8e8e6"></div><div class="a" style="left:1014.5px;top:255.3px;width:1px;height:20.3px;background:#e8e8e6"></div><div class="a" style="left:1100px;top:255.3px;width:1px;height:20.3px;background:#e8e8e6"></div><div class="a" style="left:948.5px;top:275.6px;width:294px;height:1px;background:#ececea"></div><div class="a" style="left:950px;top:260px;width:13px;height:12px;background:#7e62ec;border:2px solid #1a1a1a"></div><div class="t" style="left:966.6px;top:260.3px;color:#1e1e1e;font-size:11.6px">6</div><div class="t" style="left:983.6px;top:260.3px;color:#1e1e1e;font-size:11.6px">0+0</div><div class="t" style="left:1017.4px;top:260.6px;color:#1e1e1e;font-size:11.2px">rGO_117</div><div class="a" style="left:948.6px;top:276.1px;width:151.4px;height:19.8px;background:#4a90d9"></div><div class="a" style="left:980.5px;top:276.1px;width:1px;height:19.8px;background:#8ab4e6"></div><div class="a" style="left:1014.5px;top:276.1px;width:1px;height:19.8px;background:#8ab4e6"></div><div class="a" style="left:948.5px;top:295.9px;width:294px;height:1px;background:#ececea"></div><div class="a" style="left:950px;top:281px;width:13px;height:12px;background:#74a6f2;border:2px solid #1a1a1a"></div><div class="t" style="left:966.6px;top:280.6px;color:#ffffff;font-size:11.6px">7</div><div class="t" style="left:983.6px;top:280.6px;color:#ffffff;font-size:11.6px">0+0</div><div class="t" style="left:1017.4px;top:280.9px;color:#ffffff;font-size:11.2px">rGO_118</div>
<!-- info text -->
<div class="a" style="left:947.5px;top:361.5px;width:296px;height:4px;background:linear-gradient(#f2f2f1,#e0e0de);border-bottom:1px solid #c6c6c4"></div><div class="a" style="left:947.5px;top:365.5px;width:296px;height:2.5px;background:#ececeb"></div>
<div class="a" style="left:947.7px;top:368px;width:295px;height:75px;background:#fff;border:1px solid #cfcfcd;overflow:hidden">
  <div class="t" style="left:0px;top:-2.5px;color:#1e1e1e">@7: 1011 points, 1011 active.</div>
  <div class="t" style="left:0px;top:13.4px;color:#1e1e1e">Filename: /home/aleplo/test/Documents/Chem/Master/</div>
  <div class="t" style="left:0px;top:29.1px;color:#1e1e1e">Data/baked_samples/11_cas924894-85-9/Sample/</div>
  <div class="t" style="left:0px;top:44.9px;color:#1e1e1e">Raman/rGO_118.txt</div>
  <div class="t" style="left:0px;top:60.3px;color:#1e1e1e">Data title: rGO_118</div>
  <div class="a" style="left:285px;top:0;width:9px;height:73px;background:#e4e4e2"></div>
  <div class="a" style="left:287.5px;top:7.5px;width:5px;height:63px;background:#8c8c8a;border-radius:3px"></div>
</div>
<!-- dropdown -->
<div class="a" style="left:947.7px;top:445.5px;width:295px;height:25px;background:linear-gradient(#eeeeec,#e2e2e0);border:1px solid #bfbfbd;border-radius:3px"></div>
<div class="t" style="left:954.8px;top:453px">show all datasets</div>
<svg class="a" style="left:1225px;top:455px" width="10" height="6"><path d="M0.5 0.5 L9.5 0.5 L5 5.5 Z" fill="#2e3436"/></svg>
<!-- spin row -->
<svg class="a" style="left:950px;top:481px" width="10" height="11"><circle cx="2" cy="3.2" r="1.2" fill="#000"/><circle cx="4" cy="1.2" r="0.8" fill="#000"/><circle cx="6.5" cy="2.4" r="0.9" fill="#000"/><circle cx="3" cy="5.6" r="1.5" fill="#000"/><circle cx="6.3" cy="7.3" r="2.6" fill="#000"/></svg>
<div class="a" style="left:959.7px;top:473px;width:29px;height:26.5px;background:#fff;border:1px solid #c8c8c6;border-radius:3px"></div>
<div class="a" style="left:959.7px;top:473px;width:17px;height:26.5px;border:1.3px solid #4a90d9;border-right:none;border-radius:3px 0 0 3px"></div>
<div class="a" style="left:976.5px;top:486px;width:12px;height:1px;background:#e0e0de"></div>
<div class="t" style="left:967px;top:481px;font-size:11.5px">5</div>
<div class="a" style="left:966.5px;top:479.5px;width:1px;height:14px;background:#222"></div>
<svg class="a" style="left:978px;top:477px" width="9" height="20"><path d="M1.5 5 L7.5 5 L4.5 1.8 Z M1.5 15 L7.5 15 L4.5 18.2 Z" fill="#2e3436"/></svg>
<div class="a" style="left:995px;top:480.6px;width:12.7px;height:11.5px;background:linear-gradient(#f8f8f7,#e8e8e6);border:1px solid #b4b4b2;border-radius:3px"></div>
<div class="t" style="left:1012.8px;top:481px">line</div>
<div class="a" style="left:1037.3px;top:480.6px;width:12.5px;height:11.5px;background:linear-gradient(#f8f8f7,#e8e8e6);border:1px solid #b4b4b2;border-radius:3px"></div>
<div class="t" style="left:1054.4px;top:481px">σ</div>
<svg class="a" style="left:1195px;top:478px" width="11" height="16"><rect x="1" y="1" width="8" height="1.6" fill="#22dd22"/><rect x="1" y="13.2" width="8" height="1.6" fill="#22dd22"/><path d="M5 3 L5 13 M2.5 6 L5 3 L7.5 6" stroke="#111" stroke-width="1.5" fill="none"/></svg>
<div class="a" style="left:1206.7px;top:473px;width:36px;height:26.5px;background:#fff;border:1px solid #c8c8c6;border-radius:3px"></div>
<div class="a" style="left:1230px;top:474px;width:1px;height:25px;background:#e4e4e2"></div>
<div class="a" style="left:1231px;top:486px;width:11px;height:1px;background:#e0e0de"></div>
<div class="t" style="left:1213px;top:481px">0</div>
<svg class="a" style="left:1232px;top:477px" width="9" height="20"><path d="M1.5 5 L7.5 5 L4.5 1.8 Z" fill="#2e3436"/><path d="M1.5 15 L7.5 15 L4.5 18.2 Z" fill="#a8a8a6"/></svg>
<!-- buttons -->
<div class="btn" style="left:948.3px;top:501.5px;width:28.5px;height:29px"></div>
<div class="btn" style="left:979.3px;top:501.5px;width:28.8px;height:29px"></div>
<div class="btn" style="left:1010.2px;top:501.5px;width:29.2px;height:29px;background:#f6f6f5"></div>
<div class="btn" style="left:1041.8px;top:501.5px;width:28.5px;height:29px"></div>
<div class="btn" style="left:1072.8px;top:501.5px;width:28.7px;height:29px"></div>
<svg class="a" style="left:953px;top:507px" width="19" height="19"><rect x="0.5" y="0.5" width="18" height="18" fill="#000"/>
<rect x="2" y="2" width="4.5" height="4.5" fill="#f4a0a0"/><rect x="7.2" y="2" width="4.5" height="4.5" fill="#5080e0"/><rect x="12.4" y="2" width="4.5" height="4.5" fill="#f0e080"/>
<rect x="2" y="7.2" width="4.5" height="4.5" fill="#f0d8c0"/><rect x="7.2" y="7.2" width="4.5" height="4.5" fill="#c0b0a0"/><rect x="12.4" y="7.2" width="4.5" height="4.5" fill="#d09050"/>
<rect x="2" y="12.4" width="4.5" height="4.5" fill="#f0b0b0"/><rect x="7.2" y="12.4" width="4.5" height="4.5" fill="#50b060"/><rect x="12.4" y="12.4" width="4.5" height="4.5" fill="#5080e0"/>
<path d="M8 4 L10 4 L10.5 9 L14 10 L13.5 16 L8 16 L6 11 Z" fill="#e0d0b8" stroke="#806850" stroke-width="0.6"/></svg>
<div class="t" style="left:985px;top:506px;font-size:20px;font-weight:bold;color:#111;font-family:'Liberation Serif',serif">Σ</div>
<svg class="a" style="left:1014px;top:506px" width="22" height="20"><path d="M2 3 L8 2 L9 14 L3 15 Z" fill="#c0c0c0" stroke="#505050" stroke-width="1"/><path d="M10 7 L16 6 L17 18 L11 19 Z" fill="#c8c8c8" stroke="#505050" stroke-width="1"/><path d="M16 8 L21 7 L21 17 L16 18" fill="#d0d0d0" stroke="#505050" stroke-width="1"/><path d="M4 6 L8 9 M11 11 L15 13" stroke="#404040" stroke-width="1"/></svg>
<svg class="a" style="left:1045px;top:509px" width="22" height="14"><rect x="0.8" y="0.8" width="20.4" height="12.4" fill="#f4f4f4" stroke="#111" stroke-width="1.4"/><text x="2.5" y="10.5" font-size="9.5" font-family="Liberation Serif" fill="#111">Inam</text></svg>
<div class="t" style="left:1081px;top:509px;font-size:15px;font-weight:bold;color:#111">✕</div>
<!-- separator -->
<div class="a" style="left:944px;top:535px;width:304px;height:3px;background:#d8d8d6;border-top:1px solid #cdcdcb"></div>
<div class="t" style="left:1061px;top:543px;width:67.5px;text-align:center">%bg7 : Spline</div>
<div class="t" style="left:943px;top:567px;font-size:11.6px">x1</div>
<div class="a" style="left:958.5px;top:559px;width:139.5px;height:26px;background:#fff;border:1px solid #c6c6c4;border-radius:3px"></div>
<div class="t" style="left:966px;top:567px">1350.3</div>
<div class="t" style="left:942.5px;top:599px;font-size:11.6px">y1</div>
<div class="a" style="left:958.5px;top:591px;width:139.5px;height:26.3px;background:#fff;border:1px solid #c6c6c4;border-radius:3px"></div>
<div class="t" style="left:966px;top:599px">42</div>
<svg class="a" style="left:1103.8px;top:565.5px" width="12" height="12"><path d="M3 5 L3 3.5 A3 3 0 0 1 9 3.5 L9 5" fill="none" stroke="#3a3a3a" stroke-width="1.4"/><rect x="1.2" y="5" width="9.6" height="6.5" rx="1" fill="#c8904a" stroke="#4a3a20" stroke-width="0.9"/><rect x="2" y="5.6" width="8" height="1.6" fill="#e8b878"/></svg><svg class="a" style="left:1103.8px;top:597.5px" width="12" height="12"><path d="M3 5 L3 3.5 A3 3 0 0 1 9 3.5 L9 5" fill="none" stroke="#3a3a3a" stroke-width="1.4"/><rect x="1.2" y="5" width="9.6" height="6.5" rx="1" fill="#c8904a" stroke="#4a3a20" stroke-width="0.9"/><rect x="2" y="5.6" width="8" height="1.6" fill="#e8b878"/></svg><div class="a" style="left:1129.7px;top:570.3px;width:110px;height:3px;background:#c8c8c6;border-radius:2px"></div><div class="a" style="left:1129.7px;top:570.3px;width:55px;height:3px;background:#2a68b0;border-radius:2px"></div><div class="a" style="left:1176.5px;top:564.3px;width:15px;height:15px;background:linear-gradient(#fbfbfb,#ececea);border:1px solid #b6b6b4;border-radius:50%"></div><div class="a" style="left:1129.7px;top:602.0px;width:110px;height:3px;background:#c8c8c6;border-radius:2px"></div><div class="a" style="left:1129.7px;top:602.0px;width:55px;height:3px;background:#2a68b0;border-radius:2px"></div><div class="a" style="left:1176.5px;top:596.0px;width:15px;height:15px;background:linear-gradient(#fbfbfb,#ececea);border:1px solid #b6b6b4;border-radius:50%"></div>

</body></html>
